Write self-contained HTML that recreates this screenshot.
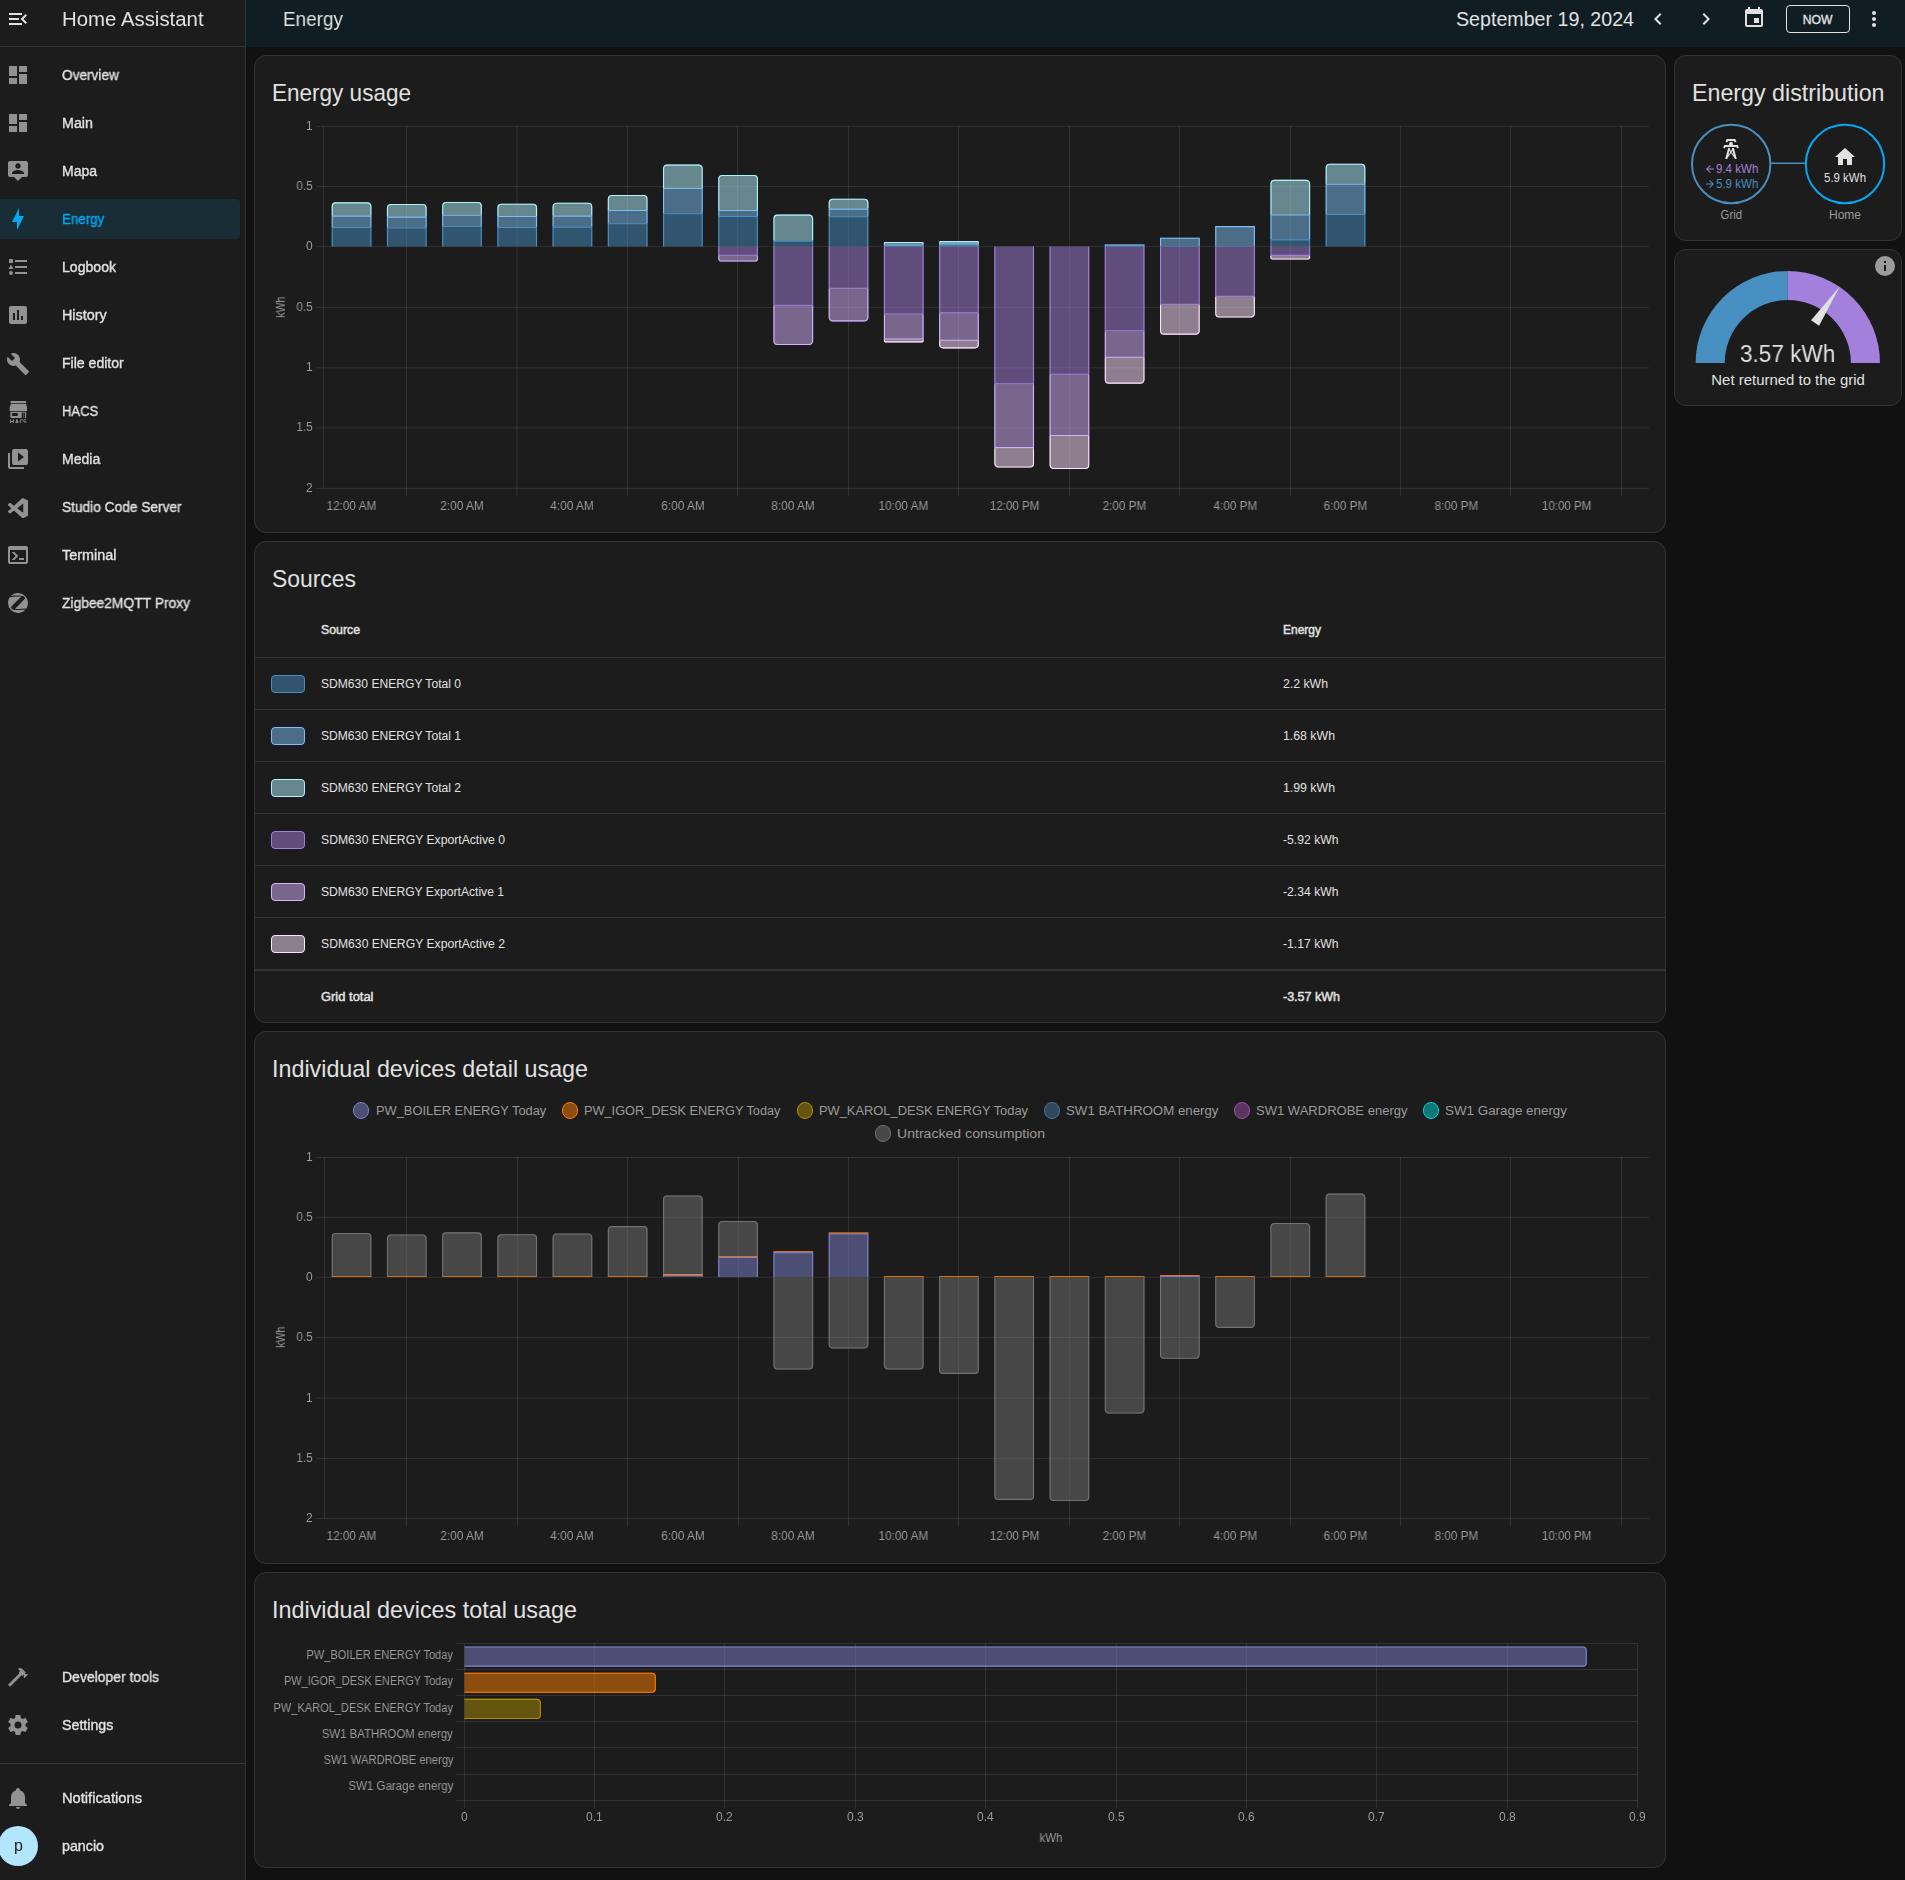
<!DOCTYPE html><html><head><meta charset="utf-8"><title>Energy – Home Assistant</title><style>
html,body{margin:0;padding:0;background:#111111;}body{width:1905px;height:1880px;position:relative;overflow:hidden;font-family:'Liberation Sans',sans-serif;-webkit-font-smoothing:antialiased}
.t{position:absolute;white-space:nowrap;line-height:1;}
</style></head><body>
<div style="position:absolute;left:0px;top:0px;width:245px;height:1880px;background:#1c1c1c;"></div>
<div style="position:absolute;left:245px;top:0px;width:1px;height:1880px;background:#343434;"></div>
<div style="position:absolute;left:0px;top:46px;width:245px;height:1px;background:#343434;"></div>
<div style="position:absolute;left:246px;top:0px;width:1659px;height:47px;background:#101e24;"></div>
<svg style="position:absolute;left:6.0px;top:7.0px" width="24" height="24" viewBox="0 0 24 24"><path fill="#e1e1e1" d="M21,15.61L19.59,17L14.58,12L19.59,7L21,8.39L17.44,12L21,15.61M3,6H16V8H3V6M3,13V11H13V13H3M3,18V16H16V18H3Z"/></svg>
<svg style="position:absolute;left:6.0px;top:63.0px" width="24" height="24" viewBox="0 0 24 24"><path fill="#929292" d="M13,3V9H21V3M13,21H21V11H13M3,21H11V15H3M3,13H11V3H3V13Z"/></svg>
<svg style="position:absolute;left:6.0px;top:111.0px" width="24" height="24" viewBox="0 0 24 24"><path fill="#929292" d="M13,3V9H21V3M13,21H21V11H13M3,21H11V15H3M3,13H11V3H3V13Z"/></svg>
<svg style="position:absolute;left:6.0px;top:159.0px" width="24" height="24" viewBox="0 0 24 24"><path fill="#929292" d="M20,2H4A2,2 0 0,0 2,4V16A2,2 0 0,0 4,18H8L12,22L16,18H20A2,2 0 0,0 22,16V4A2,2 0 0,0 20,2M12,4.3C13.5,4.3 14.7,5.5 14.7,7C14.7,8.5 13.5,9.7 12,9.7C10.5,9.7 9.3,8.5 9.3,7C9.3,5.5 10.5,4.3 12,4.3M18,15H6V14.1C6,12.1 10,11 12,11C14,11 18,12.1 18,14.1V15Z"/></svg>
<div style="position:absolute;left:0px;top:199px;width:240px;height:40px;background:#192d36;border-radius:0 4px 4px 0;"></div>
<svg style="position:absolute;left:6.0px;top:207.0px" width="24" height="24" viewBox="0 0 24 24"><path fill="#03a9f4" d="M11,15H6L13,1V9H18L11,23V15Z"/></svg>
<svg style="position:absolute;left:6.0px;top:255.0px" width="24" height="24" viewBox="0 0 24 24"><path fill="#929292" d="M5,9.5L7.5,14H2.5L5,9.5M3,4H7V8H3V4M5,20A2,2 0 0,0 7,18A2,2 0 0,0 5,16A2,2 0 0,0 3,18A2,2 0 0,0 5,20M9,5V7H21V5H9M9,19H21V17H9V19M9,13H21V11H9V13Z"/></svg>
<svg style="position:absolute;left:6.0px;top:303.0px" width="24" height="24" viewBox="0 0 24 24"><path fill="#929292" d="M17,17H15V13H17M13,17H11V7H13M9,17H7V10H9M19,3H5C3.89,3 3,3.89 3,5V19A2,2 0 0,0 5,21H19A2,2 0 0,0 21,19V5C21,3.89 20.1,3 19,3Z"/></svg>
<svg style="position:absolute;left:6.0px;top:352.0px" width="24" height="24" viewBox="0 0 24 24"><path fill="#929292" d="M22.7,19L13.6,9.9C14.5,7.6 14,4.9 12.1,3C10.1,1 7.1,0.6 4.7,1.7L9,6L6,9L1.6,4.7C0.4,7.1 0.9,10.1 2.9,12.1C4.8,14 7.5,14.5 9.8,13.6L18.9,22.7C19.3,23.1 19.9,23.1 20.3,22.7L22.6,20.4C23.1,20 23.1,19.3 22.7,19Z"/></svg>
<svg style="position:absolute;left:6px;top:399px" width="24" height="24" viewBox="0 0 24 24"><path fill="#929292" fill-rule="evenodd" d="M4.55,1.9H20.1V3.9H4.55ZM5.0,4.7H20.1L21.1,8.6V11.95H3.6V8.6ZM4.4,12.7H20.1V18.9H5.2Q4.4,18.9 4.4,18.1ZM6.1,14.1H11.8V17H6.1ZM15.7,13.4H18.9V18.9H15.7ZM17.1,13.4H17.5V18.9H17.1Z"/><g fill="none" stroke="#929292" stroke-width="1.0"><path transform="translate(4.6,20.85)" d="M0,-0.5V4M2.8,-0.5V4M0,1.75H2.8"/><path transform="translate(9.5,20.85)" d="M0,4L1.45,-0.4L2.9,4M0.6,2.6H2.3"/><path transform="translate(14.3,20.85)" d="M2.5,0H0.7Q0,0 0,0.7V2.8Q0,3.5 0.7,3.5H2.5"/><path transform="translate(17.6,20.85)" d="M2.3,0H0.7Q0,0 0,0.7V1.1Q0,1.75 0.7,1.75H1.6Q2.3,1.75 2.3,2.4V2.8Q2.3,3.5 1.6,3.5H-0.1"/></g></svg>
<svg style="position:absolute;left:6.0px;top:447.0px" width="24" height="24" viewBox="0 0 24 24"><path fill="#929292" d="M4,6H2V20A2,2 0 0,0 4,22H18V20H4V6M20,2H8A2,2 0 0,0 6,4V16A2,2 0 0,0 8,18H20A2,2 0 0,0 22,16V4A2,2 0 0,0 20,2M12,14.5V5.5L18,10L12,14.5Z"/></svg>
<svg style="position:absolute;left:7.799999999999999px;top:497.85px" width="20.3" height="20.3" viewBox="0 0 24 24"><path fill="#929292" d="M23.15 2.587L18.21.21a1.494 1.494 0 0 0-1.705.29l-9.46 8.63-4.12-3.128a.999.999 0 0 0-1.276.057L.327 7.261A1 1 0 0 0 .326 8.74L3.899 12 .326 15.26a1 1 0 0 0 .001 1.479L1.65 17.94a.999.999 0 0 0 1.276.057l4.12-3.128 9.46 8.63a1.492 1.492 0 0 0 1.704.29l4.942-2.377A1.5 1.5 0 0 0 24 20.06V3.939a1.5 1.5 0 0 0-.85-1.352zm-5.146 14.861L10.826 12l7.178-5.448v10.896z"/></svg>
<svg style="position:absolute;left:6.0px;top:543.0px" width="24" height="24" viewBox="0 0 24 24"><path fill="#929292" d="M20,19V7H4V19H20M20,3A2,2 0 0,1 22,5V19A2,2 0 0,1 20,21H4A2,2 0 0,1 2,19V5C2,3.89 2.9,3 4,3H20M13,17V15H18V17H13M9.58,13L5.57,9H8.4L11.7,12.3C12.09,12.69 12.09,13.33 11.7,13.72L8.42,17H5.59L9.58,13Z"/></svg>
<svg style="position:absolute;left:6.0px;top:591.0px" width="24" height="24" viewBox="0 0 24 24"><path fill="#929292" d="M4.06,6.15C3.97,6.17 3.88,6.22 3.8,6.28C2.66,7.9 2,9.87 2,12A10,10 0 0,0 12,22C15,22 17.68,20.68 19.5,18.6L17,18.85C14.25,19.15 11.45,19.19 8.66,18.96C7.95,18.94 7.24,18.76 6.59,18.45C5.73,18.06 5.15,17.23 5.07,16.29C5.06,16.13 5.12,16 5.23,15.87L7.42,13.6L15.03,5.7V5.6H10.84C8.57,5.64 6.31,5.82 4.06,6.15M20.17,17.5C20.26,17.47 20.35,17.44 20.43,17.39C21.42,15.83 22,14 22,12A10,10 0 0,0 12,2C9.22,2 6.7,3.13 4.89,4.97H5.17C8.28,4.57 11.43,4.47 14.56,4.65C15.5,4.64 16.45,4.82 17.33,5.17C18.25,5.53 18.89,6.38 19,7.37C19,7.53 18.93,7.7 18.82,7.82L9.71,17.19L9,17.95V18.06H13.14C15.5,18 17.84,17.81 20.17,17.5Z"/></svg>
<svg style="position:absolute;left:6.0px;top:1665.0px" width="24" height="24" viewBox="0 0 24 24"><path fill="#929292" d="M2,19.63L13.43,8.2L12.72,7.5L14.14,6.07L12,3.89C13.2,2.7 15.09,2.7 16.27,3.89L19.87,7.5L18.45,8.91H21.29L22,9.62L18.45,13.21L17.74,12.5V9.62L16.27,11.04L15.56,10.33L4.13,21.76L2,19.63Z"/></svg>
<svg style="position:absolute;left:6.0px;top:1713.0px" width="24" height="24" viewBox="0 0 24 24"><path fill="#929292" d="M12,15.5A3.5,3.5 0 0,1 8.5,12A3.5,3.5 0 0,1 12,8.5A3.5,3.5 0 0,1 15.5,12A3.5,3.5 0 0,1 12,15.5M19.43,12.97C19.47,12.65 19.5,12.33 19.5,12C19.5,11.67 19.47,11.34 19.43,11L21.54,9.37C21.73,9.22 21.78,8.95 21.66,8.73L19.66,5.27C19.54,5.05 19.27,4.96 19.05,5.05L16.56,6.05C16.04,5.66 15.5,5.32 14.87,5.07L14.5,2.42C14.46,2.18 14.25,2 14,2H10C9.75,2 9.54,2.18 9.5,2.42L9.13,5.07C8.5,5.32 7.96,5.66 7.44,6.05L4.95,5.05C4.73,4.96 4.46,5.05 4.34,5.27L2.34,8.73C2.21,8.95 2.27,9.22 2.46,9.37L4.57,11C4.53,11.34 4.5,11.67 4.5,12C4.5,12.33 4.53,12.65 4.57,12.97L2.46,14.63C2.27,14.78 2.21,15.05 2.34,15.27L4.34,18.73C4.46,18.95 4.73,19.03 4.95,18.95L7.44,17.94C7.96,18.34 8.5,18.68 9.13,18.93L9.5,21.58C9.54,21.82 9.75,22 10,22H14C14.25,22 14.46,21.82 14.5,21.58L14.87,18.93C15.5,18.67 16.04,18.34 16.56,17.94L19.05,18.95C19.27,19.03 19.54,18.95 19.66,18.73L21.66,15.27C21.78,15.05 21.73,14.78 21.54,14.63L19.43,12.97Z"/></svg>
<svg style="position:absolute;left:6.0px;top:1786.0px" width="24" height="24" viewBox="0 0 24 24"><path fill="#929292" d="M21,19V20H3V19L5,17V11C5,7.9 7.03,5.17 10,4.29C10,4.19 10,4.1 10,4A2,2 0 0,1 12,2A2,2 0 0,1 14,4C14,4.1 14,4.19 14,4.29C16.97,5.17 19,7.9 19,11V17L21,19M14,21A2,2 0 0,1 12,23A2,2 0 0,1 10,21"/></svg>
<div style="position:absolute;left:0px;top:1763px;width:245px;height:1px;background:#343434;"></div>
<div style="position:absolute;left:-2px;top:1826px;width:40px;height:40px;background:#b3e5fc;border-radius:50%;"></div>
<svg style="position:absolute;left:1646.0px;top:7.0px" width="24" height="24" viewBox="0 0 24 24"><path fill="#e1e1e1" d="M15.41,16.58L10.83,12L15.41,7.41L14,6L8,12L14,18L15.41,16.58Z"/></svg>
<svg style="position:absolute;left:1694.4px;top:7.0px" width="24" height="24" viewBox="0 0 24 24"><path fill="#e1e1e1" d="M8.59,16.58L13.17,12L8.59,7.41L10,6L16,12L10,18L8.59,16.58Z"/></svg>
<svg style="position:absolute;left:1742.0px;top:6.0px" width="24" height="24" viewBox="0 0 24 24"><path fill="#e1e1e1" d="M19,19H5V8H19M16,1V3H8V1H6V3H5C3.89,3 3,3.89 3,5V19A2,2 0 0,0 5,21H19A2,2 0 0,0 21,19V5C21,3.89 20.1,3 19,3H18V1M17,12H12V17H17V12Z"/></svg>
<div style="position:absolute;left:1786px;top:5px;width:64px;height:28px;background:transparent;box-sizing:border-box;border:1px solid #e1e1e1;border-radius:4px;"></div>
<svg style="position:absolute;left:1861.7px;top:7.0px" width="24" height="24" viewBox="0 0 24 24"><path fill="#e1e1e1" d="M12,16A2,2 0 0,1 14,18A2,2 0 0,1 12,20A2,2 0 0,1 10,18A2,2 0 0,1 12,16M12,10A2,2 0 0,1 14,12A2,2 0 0,1 12,14A2,2 0 0,1 10,12A2,2 0 0,1 12,10M12,4A2,2 0 0,1 14,6A2,2 0 0,1 12,8A2,2 0 0,1 10,6A2,2 0 0,1 12,4Z"/></svg>
<div style="position:absolute;left:254px;top:55px;width:1412px;height:478px;background:#1c1c1c;box-sizing:border-box;border:1px solid #343434;border-radius:12px;"></div>
<div style="position:absolute;left:254px;top:541px;width:1412px;height:482px;background:#1c1c1c;box-sizing:border-box;border:1px solid #343434;border-radius:12px;"></div>
<div style="position:absolute;left:254px;top:1031px;width:1412px;height:533px;background:#1c1c1c;box-sizing:border-box;border:1px solid #343434;border-radius:12px;"></div>
<div style="position:absolute;left:254px;top:1572px;width:1412px;height:296px;background:#1c1c1c;box-sizing:border-box;border:1px solid #343434;border-radius:12px;"></div>
<div style="position:absolute;left:1674px;top:55px;width:228px;height:186px;background:#1c1c1c;box-sizing:border-box;border:1px solid #343434;border-radius:12px;"></div>
<div style="position:absolute;left:1674px;top:249px;width:228px;height:157px;background:#1c1c1c;box-sizing:border-box;border:1px solid #343434;border-radius:12px;"></div>
<div style="position:absolute;left:352.6px;top:1102.2px;width:16.6px;height:16.6px;box-sizing:border-box;border-radius:50%;background:rgba(127,128,205,0.498);border:1px solid #7f80cd"></div>
<div style="position:absolute;left:561.7px;top:1102.2px;width:16.6px;height:16.6px;box-sizing:border-box;border-radius:50%;background:rgba(255,127,0,0.498);border:1px solid #ff7f00"></div>
<div style="position:absolute;left:796.8px;top:1102.2px;width:16.6px;height:16.6px;box-sizing:border-box;border-radius:50%;background:rgba(175,141,0,0.498);border:1px solid #af8d00"></div>
<div style="position:absolute;left:1043.5px;top:1102.2px;width:16.6px;height:16.6px;box-sizing:border-box;border-radius:50%;background:rgba(68,115,158,0.498);border:1px solid #44739e"></div>
<div style="position:absolute;left:1233.5px;top:1102.2px;width:16.6px;height:16.6px;box-sizing:border-box;border-radius:50%;background:rgba(152,78,163,0.498);border:1px solid #984ea3"></div>
<div style="position:absolute;left:1422.5px;top:1102.2px;width:16.6px;height:16.6px;box-sizing:border-box;border-radius:50%;background:rgba(0,210,213,0.498);border:1px solid #00d2d5"></div>
<div style="position:absolute;left:874.5px;top:1125.4px;width:16.6px;height:16.6px;box-sizing:border-box;border-radius:50%;background:rgba(114,114,114,0.498);border:1px solid #727272"></div>
<svg style="position:absolute;left:0;top:0" width="1905" height="1880" viewBox="0 0 1905 1880"><path d="M406.5 125.9L406.5 496.3" stroke="rgba(225,225,225,0.105)" stroke-width="1" fill="none"/><path d="M517.0 125.9L517.0 496.3" stroke="rgba(225,225,225,0.105)" stroke-width="1" fill="none"/><path d="M627.5 125.9L627.5 496.3" stroke="rgba(225,225,225,0.105)" stroke-width="1" fill="none"/><path d="M737.5 125.9L737.5 496.3" stroke="rgba(225,225,225,0.105)" stroke-width="1" fill="none"/><path d="M848.5 125.9L848.5 496.3" stroke="rgba(225,225,225,0.105)" stroke-width="1" fill="none"/><path d="M958.5 125.9L958.5 496.3" stroke="rgba(225,225,225,0.105)" stroke-width="1" fill="none"/><path d="M1069.5 125.9L1069.5 496.3" stroke="rgba(225,225,225,0.105)" stroke-width="1" fill="none"/><path d="M1179.5 125.9L1179.5 496.3" stroke="rgba(225,225,225,0.105)" stroke-width="1" fill="none"/><path d="M1290.5 125.9L1290.5 496.3" stroke="rgba(225,225,225,0.105)" stroke-width="1" fill="none"/><path d="M1400.5 125.9L1400.5 496.3" stroke="rgba(225,225,225,0.105)" stroke-width="1" fill="none"/><path d="M1510.5 125.9L1510.5 496.3" stroke="rgba(225,225,225,0.105)" stroke-width="1" fill="none"/><path d="M1621.5 125.9L1621.5 496.3" stroke="rgba(225,225,225,0.105)" stroke-width="1" fill="none"/><path d="M316 126.4L1649 126.4" stroke="rgba(225,225,225,0.105)" stroke-width="1" fill="none"/><path d="M316 186.4L1649 186.4" stroke="rgba(225,225,225,0.105)" stroke-width="1" fill="none"/><path d="M316 246.6L1649 246.6" stroke="rgba(225,225,225,0.105)" stroke-width="1" fill="none"/><path d="M316 307.4L1649 307.4" stroke="rgba(225,225,225,0.105)" stroke-width="1" fill="none"/><path d="M316 367.8L1649 367.8" stroke="rgba(225,225,225,0.105)" stroke-width="1" fill="none"/><path d="M316 427.9L1649 427.9" stroke="rgba(225,225,225,0.105)" stroke-width="1" fill="none"/><path d="M316 488.3L1649 488.3" stroke="rgba(225,225,225,0.105)" stroke-width="1" fill="none"/><path d="M323.5 125.9L323.5 488.8" stroke="rgba(225,225,225,0.105)" stroke-width="1" fill="none"/><path d="M331.70 246.60L331.70 226.95L371.40 226.95L371.40 246.60Z" fill="rgba(72,143,194,0.498)"/><path d="M332.25 246.60L332.25 227.50L370.85 227.50L370.85 246.60" fill="none" stroke="#488fc2" stroke-width="1.1"/><path d="M331.70 226.95L331.70 215.55L371.40 215.55L371.40 226.95Z" fill="rgba(125,191,245,0.498)"/><path d="M332.25 226.95L332.25 216.10L370.85 216.10L370.85 226.95" fill="none" stroke="#7dbff5" stroke-width="1.1"/><path d="M331.70 215.55L331.70 206.30A4.00 4.00 0 0 1 335.70 202.30L367.40 202.30A4.00 4.00 0 0 1 371.40 206.30L371.40 215.55Z" fill="rgba(177,242,255,0.498)"/><path d="M332.25 215.55L332.25 206.30A3.45 3.45 0 0 1 335.70 202.85L367.40 202.85A3.45 3.45 0 0 1 370.85 206.30L370.85 215.55" fill="none" stroke="#b1f2ff" stroke-width="1.1"/><path d="M386.92 246.60L386.92 227.45L426.62 227.45L426.62 246.60Z" fill="rgba(72,143,194,0.498)"/><path d="M387.47 246.60L387.47 228.00L426.07 228.00L426.07 246.60" fill="none" stroke="#488fc2" stroke-width="1.1"/><path d="M386.92 227.45L386.92 216.55L426.62 216.55L426.62 227.45Z" fill="rgba(125,191,245,0.498)"/><path d="M387.47 227.45L387.47 217.10L426.07 217.10L426.07 227.45" fill="none" stroke="#7dbff5" stroke-width="1.1"/><path d="M386.92 216.55L386.92 207.90A4.00 4.00 0 0 1 390.92 203.90L422.62 203.90A4.00 4.00 0 0 1 426.62 207.90L426.62 216.55Z" fill="rgba(177,242,255,0.498)"/><path d="M387.47 216.55L387.47 207.90A3.45 3.45 0 0 1 390.92 204.45L422.62 204.45A3.45 3.45 0 0 1 426.07 207.90L426.07 216.55" fill="none" stroke="#b1f2ff" stroke-width="1.1"/><path d="M442.14 246.60L442.14 225.95L481.84 225.95L481.84 246.60Z" fill="rgba(72,143,194,0.498)"/><path d="M442.69 246.60L442.69 226.50L481.29 226.50L481.29 246.60" fill="none" stroke="#488fc2" stroke-width="1.1"/><path d="M442.14 225.95L442.14 214.65L481.84 214.65L481.84 225.95Z" fill="rgba(125,191,245,0.498)"/><path d="M442.69 225.95L442.69 215.20L481.29 215.20L481.29 225.95" fill="none" stroke="#7dbff5" stroke-width="1.1"/><path d="M442.14 214.65L442.14 206.00A4.00 4.00 0 0 1 446.14 202.00L477.84 202.00A4.00 4.00 0 0 1 481.84 206.00L481.84 214.65Z" fill="rgba(177,242,255,0.498)"/><path d="M442.69 214.65L442.69 206.00A3.45 3.45 0 0 1 446.14 202.55L477.84 202.55A3.45 3.45 0 0 1 481.29 206.00L481.29 214.65" fill="none" stroke="#b1f2ff" stroke-width="1.1"/><path d="M497.36 246.60L497.36 226.95L537.06 226.95L537.06 246.60Z" fill="rgba(72,143,194,0.498)"/><path d="M497.91 246.60L497.91 227.50L536.51 227.50L536.51 246.60" fill="none" stroke="#488fc2" stroke-width="1.1"/><path d="M497.36 226.95L497.36 215.95L537.06 215.95L537.06 226.95Z" fill="rgba(125,191,245,0.498)"/><path d="M497.91 226.95L497.91 216.50L536.51 216.50L536.51 226.95" fill="none" stroke="#7dbff5" stroke-width="1.1"/><path d="M497.36 215.95L497.36 207.70A4.00 4.00 0 0 1 501.36 203.70L533.06 203.70A4.00 4.00 0 0 1 537.06 207.70L537.06 215.95Z" fill="rgba(177,242,255,0.498)"/><path d="M497.91 215.95L497.91 207.70A3.45 3.45 0 0 1 501.36 204.25L533.06 204.25A3.45 3.45 0 0 1 536.51 207.70L536.51 215.95" fill="none" stroke="#b1f2ff" stroke-width="1.1"/><path d="M552.58 246.60L552.58 226.55L592.28 226.55L592.28 246.60Z" fill="rgba(72,143,194,0.498)"/><path d="M553.13 246.60L553.13 227.10L591.73 227.10L591.73 246.60" fill="none" stroke="#488fc2" stroke-width="1.1"/><path d="M552.58 226.55L552.58 215.55L592.28 215.55L592.28 226.55Z" fill="rgba(125,191,245,0.498)"/><path d="M553.13 226.55L553.13 216.10L591.73 216.10L591.73 226.55" fill="none" stroke="#7dbff5" stroke-width="1.1"/><path d="M552.58 215.55L552.58 206.70A4.00 4.00 0 0 1 556.58 202.70L588.28 202.70A4.00 4.00 0 0 1 592.28 206.70L592.28 215.55Z" fill="rgba(177,242,255,0.498)"/><path d="M553.13 215.55L553.13 206.70A3.45 3.45 0 0 1 556.58 203.25L588.28 203.25A3.45 3.45 0 0 1 591.73 206.70L591.73 215.55" fill="none" stroke="#b1f2ff" stroke-width="1.1"/><path d="M607.80 246.60L607.80 223.15L647.50 223.15L647.50 246.60Z" fill="rgba(72,143,194,0.498)"/><path d="M608.35 246.60L608.35 223.70L646.95 223.70L646.95 246.60" fill="none" stroke="#488fc2" stroke-width="1.1"/><path d="M607.80 223.15L607.80 209.95L647.50 209.95L647.50 223.15Z" fill="rgba(125,191,245,0.498)"/><path d="M608.35 223.15L608.35 210.50L646.95 210.50L646.95 223.15" fill="none" stroke="#7dbff5" stroke-width="1.1"/><path d="M607.80 209.95L607.80 199.00A4.00 4.00 0 0 1 611.80 195.00L643.50 195.00A4.00 4.00 0 0 1 647.50 199.00L647.50 209.95Z" fill="rgba(177,242,255,0.498)"/><path d="M608.35 209.95L608.35 199.00A3.45 3.45 0 0 1 611.80 195.55L643.50 195.55A3.45 3.45 0 0 1 646.95 199.00L646.95 209.95" fill="none" stroke="#b1f2ff" stroke-width="1.1"/><path d="M663.02 246.60L663.02 213.15L702.72 213.15L702.72 246.60Z" fill="rgba(72,143,194,0.498)"/><path d="M663.57 246.60L663.57 213.70L702.17 213.70L702.17 246.60" fill="none" stroke="#488fc2" stroke-width="1.1"/><path d="M663.02 213.15L663.02 187.95L702.72 187.95L702.72 213.15Z" fill="rgba(125,191,245,0.498)"/><path d="M663.57 213.15L663.57 188.50L702.17 188.50L702.17 213.15" fill="none" stroke="#7dbff5" stroke-width="1.1"/><path d="M663.02 187.95L663.02 168.60A4.00 4.00 0 0 1 667.02 164.60L698.72 164.60A4.00 4.00 0 0 1 702.72 168.60L702.72 187.95Z" fill="rgba(177,242,255,0.498)"/><path d="M663.57 187.95L663.57 168.60A3.45 3.45 0 0 1 667.02 165.15L698.72 165.15A3.45 3.45 0 0 1 702.17 168.60L702.17 187.95" fill="none" stroke="#b1f2ff" stroke-width="1.1"/><path d="M718.24 246.60L718.24 215.95L757.94 215.95L757.94 246.60Z" fill="rgba(72,143,194,0.498)"/><path d="M718.79 246.60L718.79 216.50L757.39 216.50L757.39 246.60" fill="none" stroke="#488fc2" stroke-width="1.1"/><path d="M718.24 215.95L718.24 209.95L757.94 209.95L757.94 215.95Z" fill="rgba(125,191,245,0.498)"/><path d="M718.79 215.95L718.79 210.50L757.39 210.50L757.39 215.95" fill="none" stroke="#7dbff5" stroke-width="1.1"/><path d="M718.24 209.95L718.24 178.90A4.00 4.00 0 0 1 722.24 174.90L753.94 174.90A4.00 4.00 0 0 1 757.94 178.90L757.94 209.95Z" fill="rgba(177,242,255,0.498)"/><path d="M718.79 209.95L718.79 178.90A3.45 3.45 0 0 1 722.24 175.45L753.94 175.45A3.45 3.45 0 0 1 757.39 178.90L757.39 209.95" fill="none" stroke="#b1f2ff" stroke-width="1.1"/><path d="M718.24 246.60L718.24 255.85L757.94 255.85L757.94 246.60Z" fill="rgba(162,128,219,0.498)"/><path d="M718.79 246.60L718.79 255.30L757.39 255.30L757.39 246.60" fill="none" stroke="#a280db" stroke-width="1.1"/><path d="M718.24 255.85L718.24 258.68A2.82 2.82 0 0 0 721.06 261.50L755.12 261.50A2.82 2.82 0 0 0 757.94 258.68L757.94 255.85Z" fill="rgba(213,176,255,0.498)"/><path d="M718.79 255.85L718.79 258.68A2.27 2.27 0 0 0 721.06 260.95L755.12 260.95A2.27 2.27 0 0 0 757.39 258.68L757.39 255.85" fill="none" stroke="#d5b0ff" stroke-width="1.1"/><path d="M773.46 246.60L773.46 240.55L813.16 240.55L813.16 246.60Z" fill="rgba(72,143,194,0.498)"/><path d="M774.01 246.60L774.01 241.10L812.61 241.10L812.61 246.60" fill="none" stroke="#488fc2" stroke-width="1.1"/><path d="M773.46 240.55L773.46 218.60A4.00 4.00 0 0 1 777.46 214.60L809.16 214.60A4.00 4.00 0 0 1 813.16 218.60L813.16 240.55Z" fill="rgba(177,242,255,0.498)"/><path d="M774.01 240.55L774.01 218.60A3.45 3.45 0 0 1 777.46 215.15L809.16 215.15A3.45 3.45 0 0 1 812.61 218.60L812.61 240.55" fill="none" stroke="#b1f2ff" stroke-width="1.1"/><path d="M773.46 246.60L773.46 305.85L813.16 305.85L813.16 246.60Z" fill="rgba(162,128,219,0.498)"/><path d="M774.01 246.60L774.01 305.30L812.61 305.30L812.61 246.60" fill="none" stroke="#a280db" stroke-width="1.1"/><path d="M773.46 305.85L773.46 341.00A4.00 4.00 0 0 0 777.46 345.00L809.16 345.00A4.00 4.00 0 0 0 813.16 341.00L813.16 305.85Z" fill="rgba(213,176,255,0.498)"/><path d="M774.01 305.85L774.01 341.00A3.45 3.45 0 0 0 777.46 344.45L809.16 344.45A3.45 3.45 0 0 0 812.61 341.00L812.61 305.85" fill="none" stroke="#d5b0ff" stroke-width="1.1"/><path d="M828.68 246.60L828.68 216.15L868.38 216.15L868.38 246.60Z" fill="rgba(72,143,194,0.498)"/><path d="M829.23 246.60L829.23 216.70L867.83 216.70L867.83 246.60" fill="none" stroke="#488fc2" stroke-width="1.1"/><path d="M828.68 216.15L828.68 208.55L868.38 208.55L868.38 216.15Z" fill="rgba(125,191,245,0.498)"/><path d="M829.23 216.15L829.23 209.10L867.83 209.10L867.83 216.15" fill="none" stroke="#7dbff5" stroke-width="1.1"/><path d="M828.68 208.55L828.68 202.70A4.00 4.00 0 0 1 832.68 198.70L864.38 198.70A4.00 4.00 0 0 1 868.38 202.70L868.38 208.55Z" fill="rgba(177,242,255,0.498)"/><path d="M829.23 208.55L829.23 202.70A3.45 3.45 0 0 1 832.68 199.25L864.38 199.25A3.45 3.45 0 0 1 867.83 202.70L867.83 208.55" fill="none" stroke="#b1f2ff" stroke-width="1.1"/><path d="M828.68 246.60L828.68 288.85L868.38 288.85L868.38 246.60Z" fill="rgba(162,128,219,0.498)"/><path d="M829.23 246.60L829.23 288.30L867.83 288.30L867.83 246.60" fill="none" stroke="#a280db" stroke-width="1.1"/><path d="M828.68 288.85L828.68 317.40A4.00 4.00 0 0 0 832.68 321.40L864.38 321.40A4.00 4.00 0 0 0 868.38 317.40L868.38 288.85Z" fill="rgba(213,176,255,0.498)"/><path d="M829.23 288.85L829.23 317.40A3.45 3.45 0 0 0 832.68 320.85L864.38 320.85A3.45 3.45 0 0 0 867.83 317.40L867.83 288.85" fill="none" stroke="#d5b0ff" stroke-width="1.1"/><path d="M883.90 246.60L883.90 245.45L923.60 245.45L923.60 246.60Z" fill="rgba(72,143,194,0.498)"/><path d="M884.45 246.60L884.45 246.00L923.05 246.00L923.05 246.60" fill="none" stroke="#488fc2" stroke-width="1.1"/><path d="M883.90 245.45L883.90 244.45L923.60 244.45L923.60 245.45Z" fill="rgba(125,191,245,0.498)"/><path d="M883.90 245.45L883.90 244.45L923.60 244.45L923.60 245.45Z" fill="#7dbff5"/><path d="M883.90 244.45L883.90 243.22A1.22 1.22 0 0 1 885.12 242.00L922.38 242.00A1.22 1.22 0 0 1 923.60 243.22L923.60 244.45Z" fill="rgba(177,242,255,0.498)"/><path d="M884.45 244.45L884.45 243.22A0.67 0.67 0 0 1 885.12 242.55L922.38 242.55A0.67 0.67 0 0 1 923.05 243.22L923.05 244.45" fill="none" stroke="#b1f2ff" stroke-width="1.1"/><path d="M883.90 246.60L883.90 314.55L923.60 314.55L923.60 246.60Z" fill="rgba(162,128,219,0.498)"/><path d="M884.45 246.60L884.45 314.00L923.05 314.00L923.05 246.60" fill="none" stroke="#a280db" stroke-width="1.1"/><path d="M883.90 314.55L883.90 339.55L923.60 339.55L923.60 314.55Z" fill="rgba(213,176,255,0.498)"/><path d="M884.45 314.55L884.45 339.00L923.05 339.00L923.05 314.55" fill="none" stroke="#d5b0ff" stroke-width="1.1"/><path d="M883.90 339.55L883.90 340.98A1.42 1.42 0 0 0 885.32 342.40L922.18 342.40A1.42 1.42 0 0 0 923.60 340.98L923.60 339.55Z" fill="rgba(255,226,255,0.498)"/><path d="M884.45 339.55L884.45 340.97A0.87 0.87 0 0 0 885.32 341.85L922.18 341.85A0.87 0.87 0 0 0 923.05 340.97L923.05 339.55" fill="none" stroke="#ffe2ff" stroke-width="1.1"/><path d="M939.12 246.60L939.12 245.45L978.82 245.45L978.82 246.60Z" fill="rgba(72,143,194,0.498)"/><path d="M939.67 246.60L939.67 246.00L978.27 246.00L978.27 246.60" fill="none" stroke="#488fc2" stroke-width="1.1"/><path d="M939.12 245.45L939.12 243.35L978.82 243.35L978.82 245.45Z" fill="rgba(125,191,245,0.498)"/><path d="M939.67 245.45L939.67 243.90L978.27 243.90L978.27 245.45" fill="none" stroke="#7dbff5" stroke-width="1.1"/><path d="M939.12 243.35L939.12 242.22A1.12 1.12 0 0 1 940.25 241.10L977.70 241.10A1.12 1.12 0 0 1 978.82 242.22L978.82 243.35Z" fill="rgba(177,242,255,0.498)"/><path d="M939.67 243.35L939.67 242.22A0.57 0.57 0 0 1 940.25 241.65L977.70 241.65A0.57 0.57 0 0 1 978.27 242.22L978.27 243.35" fill="none" stroke="#b1f2ff" stroke-width="1.1"/><path d="M939.12 246.60L939.12 313.45L978.82 313.45L978.82 246.60Z" fill="rgba(162,128,219,0.498)"/><path d="M939.67 246.60L939.67 312.90L978.27 312.90L978.27 246.60" fill="none" stroke="#a280db" stroke-width="1.1"/><path d="M939.12 313.45L939.12 340.85L978.82 340.85L978.82 313.45Z" fill="rgba(213,176,255,0.498)"/><path d="M939.67 313.45L939.67 340.30L978.27 340.30L978.27 313.45" fill="none" stroke="#d5b0ff" stroke-width="1.1"/><path d="M939.12 340.85L939.12 344.62A3.77 3.77 0 0 0 942.89 348.40L975.05 348.40A3.77 3.77 0 0 0 978.82 344.62L978.82 340.85Z" fill="rgba(255,226,255,0.498)"/><path d="M939.67 340.85L939.67 344.62A3.22 3.22 0 0 0 942.89 347.85L975.05 347.85A3.22 3.22 0 0 0 978.27 344.62L978.27 340.85" fill="none" stroke="#ffe2ff" stroke-width="1.1"/><path d="M994.34 246.60L994.34 384.25L1034.04 384.25L1034.04 246.60Z" fill="rgba(162,128,219,0.498)"/><path d="M994.89 246.60L994.89 383.70L1033.49 383.70L1033.49 246.60" fill="none" stroke="#a280db" stroke-width="1.1"/><path d="M994.34 384.25L994.34 448.15L1034.04 448.15L1034.04 384.25Z" fill="rgba(213,176,255,0.498)"/><path d="M994.89 384.25L994.89 447.60L1033.49 447.60L1033.49 384.25" fill="none" stroke="#d5b0ff" stroke-width="1.1"/><path d="M994.34 448.15L994.34 463.50A4.00 4.00 0 0 0 998.34 467.50L1030.04 467.50A4.00 4.00 0 0 0 1034.04 463.50L1034.04 448.15Z" fill="rgba(255,226,255,0.498)"/><path d="M994.89 448.15L994.89 463.50A3.45 3.45 0 0 0 998.34 466.95L1030.04 466.95A3.45 3.45 0 0 0 1033.49 463.50L1033.49 448.15" fill="none" stroke="#ffe2ff" stroke-width="1.1"/><path d="M1049.56 246.60L1049.56 374.75L1089.26 374.75L1089.26 246.60Z" fill="rgba(162,128,219,0.498)"/><path d="M1050.11 246.60L1050.11 374.20L1088.71 374.20L1088.71 246.60" fill="none" stroke="#a280db" stroke-width="1.1"/><path d="M1049.56 374.75L1049.56 436.05L1089.26 436.05L1089.26 374.75Z" fill="rgba(213,176,255,0.498)"/><path d="M1050.11 374.75L1050.11 435.50L1088.71 435.50L1088.71 374.75" fill="none" stroke="#d5b0ff" stroke-width="1.1"/><path d="M1049.56 436.05L1049.56 465.00A4.00 4.00 0 0 0 1053.56 469.00L1085.26 469.00A4.00 4.00 0 0 0 1089.26 465.00L1089.26 436.05Z" fill="rgba(255,226,255,0.498)"/><path d="M1050.11 436.05L1050.11 465.00A3.45 3.45 0 0 0 1053.56 468.45L1085.26 468.45A3.45 3.45 0 0 0 1088.71 465.00L1088.71 436.05" fill="none" stroke="#ffe2ff" stroke-width="1.1"/><path d="M1104.78 246.60L1104.78 245.95L1144.48 245.95L1144.48 246.60Z" fill="rgba(72,143,194,0.498)"/><path d="M1104.78 246.60L1104.78 245.95L1144.48 245.95L1144.48 246.60Z" fill="#488fc2"/><path d="M1104.78 245.95L1104.78 244.40L1144.48 244.40L1144.48 245.95Z" fill="rgba(125,191,245,0.498)"/><path d="M1105.33 245.95L1105.33 244.95L1143.93 244.95L1143.93 245.95" fill="none" stroke="#7dbff5" stroke-width="1.1"/><path d="M1104.78 246.60L1104.78 331.35L1144.48 331.35L1144.48 246.60Z" fill="rgba(162,128,219,0.498)"/><path d="M1105.33 246.60L1105.33 330.80L1143.93 330.80L1143.93 246.60" fill="none" stroke="#a280db" stroke-width="1.1"/><path d="M1104.78 331.35L1104.78 357.75L1144.48 357.75L1144.48 331.35Z" fill="rgba(213,176,255,0.498)"/><path d="M1105.33 331.35L1105.33 357.20L1143.93 357.20L1143.93 331.35" fill="none" stroke="#d5b0ff" stroke-width="1.1"/><path d="M1104.78 357.75L1104.78 379.70A4.00 4.00 0 0 0 1108.78 383.70L1140.48 383.70A4.00 4.00 0 0 0 1144.48 379.70L1144.48 357.75Z" fill="rgba(255,226,255,0.498)"/><path d="M1105.33 357.75L1105.33 379.70A3.45 3.45 0 0 0 1108.78 383.15L1140.48 383.15A3.45 3.45 0 0 0 1143.93 379.70L1143.93 357.75" fill="none" stroke="#ffe2ff" stroke-width="1.1"/><path d="M1160.00 246.60L1160.00 245.95L1199.70 245.95L1199.70 246.60Z" fill="rgba(72,143,194,0.498)"/><path d="M1160.00 246.60L1160.00 245.95L1199.70 245.95L1199.70 246.60Z" fill="#488fc2"/><path d="M1160.00 245.95L1160.00 237.70L1199.70 237.70L1199.70 245.95Z" fill="rgba(125,191,245,0.498)"/><path d="M1160.55 245.95L1160.55 238.25L1199.15 238.25L1199.15 245.95" fill="none" stroke="#7dbff5" stroke-width="1.1"/><path d="M1160.00 246.60L1160.00 304.85L1199.70 304.85L1199.70 246.60Z" fill="rgba(162,128,219,0.498)"/><path d="M1160.55 246.60L1160.55 304.30L1199.15 304.30L1199.15 246.60" fill="none" stroke="#a280db" stroke-width="1.1"/><path d="M1160.00 304.85L1160.00 330.70A4.00 4.00 0 0 0 1164.00 334.70L1195.70 334.70A4.00 4.00 0 0 0 1199.70 330.70L1199.70 304.85Z" fill="rgba(255,226,255,0.498)"/><path d="M1160.55 304.85L1160.55 330.70A3.45 3.45 0 0 0 1164.00 334.15L1195.70 334.15A3.45 3.45 0 0 0 1199.15 330.70L1199.15 304.85" fill="none" stroke="#ffe2ff" stroke-width="1.1"/><path d="M1215.22 246.60L1215.22 245.95L1254.92 245.95L1254.92 246.60Z" fill="rgba(72,143,194,0.498)"/><path d="M1215.22 246.60L1215.22 245.95L1254.92 245.95L1254.92 246.60Z" fill="#488fc2"/><path d="M1215.22 245.95L1215.22 226.10L1254.92 226.10L1254.92 245.95Z" fill="rgba(125,191,245,0.498)"/><path d="M1215.77 245.95L1215.77 226.65L1254.37 226.65L1254.37 245.95" fill="none" stroke="#7dbff5" stroke-width="1.1"/><path d="M1215.22 246.60L1215.22 296.75L1254.92 296.75L1254.92 246.60Z" fill="rgba(162,128,219,0.498)"/><path d="M1215.77 246.60L1215.77 296.20L1254.37 296.20L1254.37 246.60" fill="none" stroke="#a280db" stroke-width="1.1"/><path d="M1215.22 296.75L1215.22 313.50A4.00 4.00 0 0 0 1219.22 317.50L1250.92 317.50A4.00 4.00 0 0 0 1254.92 313.50L1254.92 296.75Z" fill="rgba(255,226,255,0.498)"/><path d="M1215.77 296.75L1215.77 313.50A3.45 3.45 0 0 0 1219.22 316.95L1250.92 316.95A3.45 3.45 0 0 0 1254.37 313.50L1254.37 296.75" fill="none" stroke="#ffe2ff" stroke-width="1.1"/><path d="M1270.44 246.60L1270.44 239.35L1310.14 239.35L1310.14 246.60Z" fill="rgba(72,143,194,0.498)"/><path d="M1270.99 246.60L1270.99 239.90L1309.59 239.90L1309.59 246.60" fill="none" stroke="#488fc2" stroke-width="1.1"/><path d="M1270.44 239.35L1270.44 214.45L1310.14 214.45L1310.14 239.35Z" fill="rgba(125,191,245,0.498)"/><path d="M1270.99 239.35L1270.99 215.00L1309.59 215.00L1309.59 239.35" fill="none" stroke="#7dbff5" stroke-width="1.1"/><path d="M1270.44 214.45L1270.44 183.80A4.00 4.00 0 0 1 1274.44 179.80L1306.14 179.80A4.00 4.00 0 0 1 1310.14 183.80L1310.14 214.45Z" fill="rgba(177,242,255,0.498)"/><path d="M1270.99 214.45L1270.99 183.80A3.45 3.45 0 0 1 1274.44 180.35L1306.14 180.35A3.45 3.45 0 0 1 1309.59 183.80L1309.59 214.45" fill="none" stroke="#b1f2ff" stroke-width="1.1"/><path d="M1270.44 246.60L1270.44 255.95L1310.14 255.95L1310.14 246.60Z" fill="rgba(162,128,219,0.498)"/><path d="M1270.99 246.60L1270.99 255.40L1309.59 255.40L1309.59 246.60" fill="none" stroke="#a280db" stroke-width="1.1"/><path d="M1270.44 255.95L1270.44 257.78A1.83 1.83 0 0 0 1272.27 259.60L1308.31 259.60A1.83 1.83 0 0 0 1310.14 257.78L1310.14 255.95Z" fill="rgba(255,226,255,0.498)"/><path d="M1270.99 255.95L1270.99 257.78A1.28 1.28 0 0 0 1272.27 259.05L1308.31 259.05A1.28 1.28 0 0 0 1309.59 257.78L1309.59 255.95" fill="none" stroke="#ffe2ff" stroke-width="1.1"/><path d="M1325.66 246.60L1325.66 213.85L1365.36 213.85L1365.36 246.60Z" fill="rgba(72,143,194,0.498)"/><path d="M1326.21 246.60L1326.21 214.40L1364.81 214.40L1364.81 246.60" fill="none" stroke="#488fc2" stroke-width="1.1"/><path d="M1325.66 213.85L1325.66 183.65L1365.36 183.65L1365.36 213.85Z" fill="rgba(125,191,245,0.498)"/><path d="M1326.21 213.85L1326.21 184.20L1364.81 184.20L1364.81 213.85" fill="none" stroke="#7dbff5" stroke-width="1.1"/><path d="M1325.66 183.65L1325.66 167.70A4.00 4.00 0 0 1 1329.66 163.70L1361.36 163.70A4.00 4.00 0 0 1 1365.36 167.70L1365.36 183.65Z" fill="rgba(177,242,255,0.498)"/><path d="M1326.21 183.65L1326.21 167.70A3.45 3.45 0 0 1 1329.66 164.25L1361.36 164.25A3.45 3.45 0 0 1 1364.81 167.70L1364.81 183.65" fill="none" stroke="#b1f2ff" stroke-width="1.1"/><path d="M406.5 1157.0L406.5 1526.5" stroke="rgba(225,225,225,0.105)" stroke-width="1" fill="none"/><path d="M517.5 1157.0L517.5 1526.5" stroke="rgba(225,225,225,0.105)" stroke-width="1" fill="none"/><path d="M627.5 1157.0L627.5 1526.5" stroke="rgba(225,225,225,0.105)" stroke-width="1" fill="none"/><path d="M738.5 1157.0L738.5 1526.5" stroke="rgba(225,225,225,0.105)" stroke-width="1" fill="none"/><path d="M848.5 1157.0L848.5 1526.5" stroke="rgba(225,225,225,0.105)" stroke-width="1" fill="none"/><path d="M958.5 1157.0L958.5 1526.5" stroke="rgba(225,225,225,0.105)" stroke-width="1" fill="none"/><path d="M1069.5 1157.0L1069.5 1526.5" stroke="rgba(225,225,225,0.105)" stroke-width="1" fill="none"/><path d="M1179.5 1157.0L1179.5 1526.5" stroke="rgba(225,225,225,0.105)" stroke-width="1" fill="none"/><path d="M1290.5 1157.0L1290.5 1526.5" stroke="rgba(225,225,225,0.105)" stroke-width="1" fill="none"/><path d="M1400.5 1157.0L1400.5 1526.5" stroke="rgba(225,225,225,0.105)" stroke-width="1" fill="none"/><path d="M1510.5 1157.0L1510.5 1526.5" stroke="rgba(225,225,225,0.105)" stroke-width="1" fill="none"/><path d="M1621.5 1157.0L1621.5 1526.5" stroke="rgba(225,225,225,0.105)" stroke-width="1" fill="none"/><path d="M316 1157.5L1649 1157.5" stroke="rgba(225,225,225,0.105)" stroke-width="1" fill="none"/><path d="M316 1217.3L1649 1217.3" stroke="rgba(225,225,225,0.105)" stroke-width="1" fill="none"/><path d="M316 1277.3L1649 1277.3" stroke="rgba(225,225,225,0.105)" stroke-width="1" fill="none"/><path d="M316 1337.5L1649 1337.5" stroke="rgba(225,225,225,0.105)" stroke-width="1" fill="none"/><path d="M316 1398.1L1649 1398.1" stroke="rgba(225,225,225,0.105)" stroke-width="1" fill="none"/><path d="M316 1458.4L1649 1458.4" stroke="rgba(225,225,225,0.105)" stroke-width="1" fill="none"/><path d="M316 1518.5L1649 1518.5" stroke="rgba(225,225,225,0.105)" stroke-width="1" fill="none"/><path d="M324.5 1157.0L324.5 1519.0" stroke="rgba(225,225,225,0.105)" stroke-width="1" fill="none"/><path d="M331.70 1277.00L331.70 1276.20L371.40 1276.20L371.40 1277.00Z" fill="rgba(255,127,0,0.498)"/><path d="M331.70 1277.00L331.70 1276.20L371.40 1276.20L371.40 1277.00Z" fill="#ff7f00"/><path d="M331.70 1276.20L331.70 1237.00A4.00 4.00 0 0 1 335.70 1233.00L367.40 1233.00A4.00 4.00 0 0 1 371.40 1237.00L371.40 1276.20Z" fill="rgba(114,114,114,0.498)"/><path d="M332.25 1276.20L332.25 1237.00A3.45 3.45 0 0 1 335.70 1233.55L367.40 1233.55A3.45 3.45 0 0 1 370.85 1237.00L370.85 1276.20" fill="none" stroke="#727272" stroke-width="1.1"/><path d="M386.92 1277.00L386.92 1276.20L426.62 1276.20L426.62 1277.00Z" fill="rgba(255,127,0,0.498)"/><path d="M386.92 1277.00L386.92 1276.20L426.62 1276.20L426.62 1277.00Z" fill="#ff7f00"/><path d="M386.92 1276.20L386.92 1238.40A4.00 4.00 0 0 1 390.92 1234.40L422.62 1234.40A4.00 4.00 0 0 1 426.62 1238.40L426.62 1276.20Z" fill="rgba(114,114,114,0.498)"/><path d="M387.47 1276.20L387.47 1238.40A3.45 3.45 0 0 1 390.92 1234.95L422.62 1234.95A3.45 3.45 0 0 1 426.07 1238.40L426.07 1276.20" fill="none" stroke="#727272" stroke-width="1.1"/><path d="M442.14 1277.00L442.14 1276.20L481.84 1276.20L481.84 1277.00Z" fill="rgba(255,127,0,0.498)"/><path d="M442.14 1277.00L442.14 1276.20L481.84 1276.20L481.84 1277.00Z" fill="#ff7f00"/><path d="M442.14 1276.20L442.14 1236.30A4.00 4.00 0 0 1 446.14 1232.30L477.84 1232.30A4.00 4.00 0 0 1 481.84 1236.30L481.84 1276.20Z" fill="rgba(114,114,114,0.498)"/><path d="M442.69 1276.20L442.69 1236.30A3.45 3.45 0 0 1 446.14 1232.85L477.84 1232.85A3.45 3.45 0 0 1 481.29 1236.30L481.29 1276.20" fill="none" stroke="#727272" stroke-width="1.1"/><path d="M497.36 1277.00L497.36 1276.20L537.06 1276.20L537.06 1277.00Z" fill="rgba(255,127,0,0.498)"/><path d="M497.36 1277.00L497.36 1276.20L537.06 1276.20L537.06 1277.00Z" fill="#ff7f00"/><path d="M497.36 1276.20L497.36 1238.20A4.00 4.00 0 0 1 501.36 1234.20L533.06 1234.20A4.00 4.00 0 0 1 537.06 1238.20L537.06 1276.20Z" fill="rgba(114,114,114,0.498)"/><path d="M497.91 1276.20L497.91 1238.20A3.45 3.45 0 0 1 501.36 1234.75L533.06 1234.75A3.45 3.45 0 0 1 536.51 1238.20L536.51 1276.20" fill="none" stroke="#727272" stroke-width="1.1"/><path d="M552.58 1277.00L552.58 1276.20L592.28 1276.20L592.28 1277.00Z" fill="rgba(255,127,0,0.498)"/><path d="M552.58 1277.00L552.58 1276.20L592.28 1276.20L592.28 1277.00Z" fill="#ff7f00"/><path d="M552.58 1276.20L552.58 1237.40A4.00 4.00 0 0 1 556.58 1233.40L588.28 1233.40A4.00 4.00 0 0 1 592.28 1237.40L592.28 1276.20Z" fill="rgba(114,114,114,0.498)"/><path d="M553.13 1276.20L553.13 1237.40A3.45 3.45 0 0 1 556.58 1233.95L588.28 1233.95A3.45 3.45 0 0 1 591.73 1237.40L591.73 1276.20" fill="none" stroke="#727272" stroke-width="1.1"/><path d="M607.80 1277.00L607.80 1276.20L647.50 1276.20L647.50 1277.00Z" fill="rgba(255,127,0,0.498)"/><path d="M607.80 1277.00L607.80 1276.20L647.50 1276.20L647.50 1277.00Z" fill="#ff7f00"/><path d="M607.80 1276.20L607.80 1230.10A4.00 4.00 0 0 1 611.80 1226.10L643.50 1226.10A4.00 4.00 0 0 1 647.50 1230.10L647.50 1276.20Z" fill="rgba(114,114,114,0.498)"/><path d="M608.35 1276.20L608.35 1230.10A3.45 3.45 0 0 1 611.80 1226.65L643.50 1226.65A3.45 3.45 0 0 1 646.95 1230.10L646.95 1276.20" fill="none" stroke="#727272" stroke-width="1.1"/><path d="M663.02 1277.00L663.02 1274.90L702.72 1274.90L702.72 1277.00Z" fill="rgba(127,128,205,0.498)"/><path d="M663.57 1277.00L663.57 1275.45L702.17 1275.45L702.17 1277.00" fill="none" stroke="#7f80cd" stroke-width="1.1"/><path d="M663.02 1274.90L663.02 1274.10L702.72 1274.10L702.72 1274.90Z" fill="rgba(255,127,0,0.498)"/><path d="M663.02 1274.90L663.02 1274.10L702.72 1274.10L702.72 1274.90Z" fill="#ff7f00"/><path d="M663.02 1274.10L663.02 1199.50A4.00 4.00 0 0 1 667.02 1195.50L698.72 1195.50A4.00 4.00 0 0 1 702.72 1199.50L702.72 1274.10Z" fill="rgba(114,114,114,0.498)"/><path d="M663.57 1274.10L663.57 1199.50A3.45 3.45 0 0 1 667.02 1196.05L698.72 1196.05A3.45 3.45 0 0 1 702.17 1199.50L702.17 1274.10" fill="none" stroke="#727272" stroke-width="1.1"/><path d="M718.24 1277.00L718.24 1256.80L757.94 1256.80L757.94 1277.00Z" fill="rgba(127,128,205,0.498)"/><path d="M718.79 1277.00L718.79 1257.35L757.39 1257.35L757.39 1277.00" fill="none" stroke="#7f80cd" stroke-width="1.1"/><path d="M718.24 1256.80L718.24 1256.00L757.94 1256.00L757.94 1256.80Z" fill="rgba(255,127,0,0.498)"/><path d="M718.24 1256.80L718.24 1256.00L757.94 1256.00L757.94 1256.80Z" fill="#ff7f00"/><path d="M718.24 1256.00L718.24 1225.00A4.00 4.00 0 0 1 722.24 1221.00L753.94 1221.00A4.00 4.00 0 0 1 757.94 1225.00L757.94 1256.00Z" fill="rgba(114,114,114,0.498)"/><path d="M718.79 1256.00L718.79 1225.00A3.45 3.45 0 0 1 722.24 1221.55L753.94 1221.55A3.45 3.45 0 0 1 757.39 1225.00L757.39 1256.00" fill="none" stroke="#727272" stroke-width="1.1"/><path d="M773.46 1277.00L773.46 1252.10L813.16 1252.10L813.16 1277.00Z" fill="rgba(127,128,205,0.498)"/><path d="M774.01 1277.00L774.01 1252.65L812.61 1252.65L812.61 1277.00" fill="none" stroke="#7f80cd" stroke-width="1.1"/><path d="M773.46 1252.10L773.46 1251.30L813.16 1251.30L813.16 1252.10Z" fill="rgba(255,127,0,0.498)"/><path d="M773.46 1252.10L773.46 1251.30L813.16 1251.30L813.16 1252.10Z" fill="#ff7f00"/><path d="M773.46 1277.30L773.46 1365.50A4.00 4.00 0 0 0 777.46 1369.50L809.16 1369.50A4.00 4.00 0 0 0 813.16 1365.50L813.16 1277.30Z" fill="rgba(114,114,114,0.498)"/><path d="M774.01 1277.30L774.01 1365.50A3.45 3.45 0 0 0 777.46 1368.95L809.16 1368.95A3.45 3.45 0 0 0 812.61 1365.50L812.61 1277.30" fill="none" stroke="#727272" stroke-width="1.1"/><path d="M828.68 1277.00L828.68 1233.30L868.38 1233.30L868.38 1277.00Z" fill="rgba(127,128,205,0.498)"/><path d="M829.23 1277.00L829.23 1233.85L867.83 1233.85L867.83 1277.00" fill="none" stroke="#7f80cd" stroke-width="1.1"/><path d="M828.68 1233.30L828.68 1232.50L868.38 1232.50L868.38 1233.30Z" fill="rgba(255,127,0,0.498)"/><path d="M828.68 1233.30L828.68 1232.50L868.38 1232.50L868.38 1233.30Z" fill="#ff7f00"/><path d="M828.68 1277.30L828.68 1344.50A4.00 4.00 0 0 0 832.68 1348.50L864.38 1348.50A4.00 4.00 0 0 0 868.38 1344.50L868.38 1277.30Z" fill="rgba(114,114,114,0.498)"/><path d="M829.23 1277.30L829.23 1344.50A3.45 3.45 0 0 0 832.68 1347.95L864.38 1347.95A3.45 3.45 0 0 0 867.83 1344.50L867.83 1277.30" fill="none" stroke="#727272" stroke-width="1.1"/><path d="M883.90 1277.00L883.90 1276.20L923.60 1276.20L923.60 1277.00Z" fill="rgba(255,127,0,0.498)"/><path d="M883.90 1277.00L883.90 1276.20L923.60 1276.20L923.60 1277.00Z" fill="#ff7f00"/><path d="M883.90 1277.30L883.90 1365.50A4.00 4.00 0 0 0 887.90 1369.50L919.60 1369.50A4.00 4.00 0 0 0 923.60 1365.50L923.60 1277.30Z" fill="rgba(114,114,114,0.498)"/><path d="M884.45 1277.30L884.45 1365.50A3.45 3.45 0 0 0 887.90 1368.95L919.60 1368.95A3.45 3.45 0 0 0 923.05 1365.50L923.05 1277.30" fill="none" stroke="#727272" stroke-width="1.1"/><path d="M939.12 1277.00L939.12 1276.20L978.82 1276.20L978.82 1277.00Z" fill="rgba(255,127,0,0.498)"/><path d="M939.12 1277.00L939.12 1276.20L978.82 1276.20L978.82 1277.00Z" fill="#ff7f00"/><path d="M939.12 1277.30L939.12 1369.90A4.00 4.00 0 0 0 943.12 1373.90L974.82 1373.90A4.00 4.00 0 0 0 978.82 1369.90L978.82 1277.30Z" fill="rgba(114,114,114,0.498)"/><path d="M939.67 1277.30L939.67 1369.90A3.45 3.45 0 0 0 943.12 1373.35L974.82 1373.35A3.45 3.45 0 0 0 978.27 1369.90L978.27 1277.30" fill="none" stroke="#727272" stroke-width="1.1"/><path d="M994.34 1277.00L994.34 1276.20L1034.04 1276.20L1034.04 1277.00Z" fill="rgba(255,127,0,0.498)"/><path d="M994.34 1277.00L994.34 1276.20L1034.04 1276.20L1034.04 1277.00Z" fill="#ff7f00"/><path d="M994.34 1277.30L994.34 1495.90A4.00 4.00 0 0 0 998.34 1499.90L1030.04 1499.90A4.00 4.00 0 0 0 1034.04 1495.90L1034.04 1277.30Z" fill="rgba(114,114,114,0.498)"/><path d="M994.89 1277.30L994.89 1495.90A3.45 3.45 0 0 0 998.34 1499.35L1030.04 1499.35A3.45 3.45 0 0 0 1033.49 1495.90L1033.49 1277.30" fill="none" stroke="#727272" stroke-width="1.1"/><path d="M1049.56 1277.00L1049.56 1276.20L1089.26 1276.20L1089.26 1277.00Z" fill="rgba(255,127,0,0.498)"/><path d="M1049.56 1277.00L1049.56 1276.20L1089.26 1276.20L1089.26 1277.00Z" fill="#ff7f00"/><path d="M1049.56 1277.30L1049.56 1497.10A4.00 4.00 0 0 0 1053.56 1501.10L1085.26 1501.10A4.00 4.00 0 0 0 1089.26 1497.10L1089.26 1277.30Z" fill="rgba(114,114,114,0.498)"/><path d="M1050.11 1277.30L1050.11 1497.10A3.45 3.45 0 0 0 1053.56 1500.55L1085.26 1500.55A3.45 3.45 0 0 0 1088.71 1497.10L1088.71 1277.30" fill="none" stroke="#727272" stroke-width="1.1"/><path d="M1104.78 1277.00L1104.78 1276.20L1144.48 1276.20L1144.48 1277.00Z" fill="rgba(255,127,0,0.498)"/><path d="M1104.78 1277.00L1104.78 1276.20L1144.48 1276.20L1144.48 1277.00Z" fill="#ff7f00"/><path d="M1104.78 1277.30L1104.78 1409.60A4.00 4.00 0 0 0 1108.78 1413.60L1140.48 1413.60A4.00 4.00 0 0 0 1144.48 1409.60L1144.48 1277.30Z" fill="rgba(114,114,114,0.498)"/><path d="M1105.33 1277.30L1105.33 1409.60A3.45 3.45 0 0 0 1108.78 1413.05L1140.48 1413.05A3.45 3.45 0 0 0 1143.93 1409.60L1143.93 1277.30" fill="none" stroke="#727272" stroke-width="1.1"/><path d="M1160.00 1277.00L1160.00 1276.00L1199.70 1276.00L1199.70 1277.00Z" fill="rgba(127,128,205,0.498)"/><path d="M1160.00 1277.00L1160.00 1276.00L1199.70 1276.00L1199.70 1277.00Z" fill="#7f80cd"/><path d="M1160.00 1276.00L1160.00 1275.20L1199.70 1275.20L1199.70 1276.00Z" fill="rgba(255,127,0,0.498)"/><path d="M1160.00 1276.00L1160.00 1275.20L1199.70 1275.20L1199.70 1276.00Z" fill="#ff7f00"/><path d="M1160.00 1277.30L1160.00 1354.80A4.00 4.00 0 0 0 1164.00 1358.80L1195.70 1358.80A4.00 4.00 0 0 0 1199.70 1354.80L1199.70 1277.30Z" fill="rgba(114,114,114,0.498)"/><path d="M1160.55 1277.30L1160.55 1354.80A3.45 3.45 0 0 0 1164.00 1358.25L1195.70 1358.25A3.45 3.45 0 0 0 1199.15 1354.80L1199.15 1277.30" fill="none" stroke="#727272" stroke-width="1.1"/><path d="M1215.22 1277.00L1215.22 1276.20L1254.92 1276.20L1254.92 1277.00Z" fill="rgba(255,127,0,0.498)"/><path d="M1215.22 1277.00L1215.22 1276.20L1254.92 1276.20L1254.92 1277.00Z" fill="#ff7f00"/><path d="M1215.22 1277.30L1215.22 1323.90A4.00 4.00 0 0 0 1219.22 1327.90L1250.92 1327.90A4.00 4.00 0 0 0 1254.92 1323.90L1254.92 1277.30Z" fill="rgba(114,114,114,0.498)"/><path d="M1215.77 1277.30L1215.77 1323.90A3.45 3.45 0 0 0 1219.22 1327.35L1250.92 1327.35A3.45 3.45 0 0 0 1254.37 1323.90L1254.37 1277.30" fill="none" stroke="#727272" stroke-width="1.1"/><path d="M1270.44 1277.00L1270.44 1276.20L1310.14 1276.20L1310.14 1277.00Z" fill="rgba(255,127,0,0.498)"/><path d="M1270.44 1277.00L1270.44 1276.20L1310.14 1276.20L1310.14 1277.00Z" fill="#ff7f00"/><path d="M1270.44 1276.20L1270.44 1227.00A4.00 4.00 0 0 1 1274.44 1223.00L1306.14 1223.00A4.00 4.00 0 0 1 1310.14 1227.00L1310.14 1276.20Z" fill="rgba(114,114,114,0.498)"/><path d="M1270.99 1276.20L1270.99 1227.00A3.45 3.45 0 0 1 1274.44 1223.55L1306.14 1223.55A3.45 3.45 0 0 1 1309.59 1227.00L1309.59 1276.20" fill="none" stroke="#727272" stroke-width="1.1"/><path d="M1325.66 1277.00L1325.66 1276.20L1365.36 1276.20L1365.36 1277.00Z" fill="rgba(255,127,0,0.498)"/><path d="M1325.66 1277.00L1325.66 1276.20L1365.36 1276.20L1365.36 1277.00Z" fill="#ff7f00"/><path d="M1325.66 1276.20L1325.66 1197.60A4.00 4.00 0 0 1 1329.66 1193.60L1361.36 1193.60A4.00 4.00 0 0 1 1365.36 1197.60L1365.36 1276.20Z" fill="rgba(114,114,114,0.498)"/><path d="M1326.21 1276.20L1326.21 1197.60A3.45 3.45 0 0 1 1329.66 1194.15L1361.36 1194.15A3.45 3.45 0 0 1 1364.81 1197.60L1364.81 1276.20" fill="none" stroke="#727272" stroke-width="1.1"/><path d="M464.5 1643.5L464.5 1808.5" stroke="rgba(225,225,225,0.105)" stroke-width="1" fill="none"/><path d="M594.5 1643.5L594.5 1808.5" stroke="rgba(225,225,225,0.105)" stroke-width="1" fill="none"/><path d="M724.5 1643.5L724.5 1808.5" stroke="rgba(225,225,225,0.105)" stroke-width="1" fill="none"/><path d="M855.5 1643.5L855.5 1808.5" stroke="rgba(225,225,225,0.105)" stroke-width="1" fill="none"/><path d="M985.5 1643.5L985.5 1808.5" stroke="rgba(225,225,225,0.105)" stroke-width="1" fill="none"/><path d="M1116.5 1643.5L1116.5 1808.5" stroke="rgba(225,225,225,0.105)" stroke-width="1" fill="none"/><path d="M1246.5 1643.5L1246.5 1808.5" stroke="rgba(225,225,225,0.105)" stroke-width="1" fill="none"/><path d="M1376.5 1643.5L1376.5 1808.5" stroke="rgba(225,225,225,0.105)" stroke-width="1" fill="none"/><path d="M1507.5 1643.5L1507.5 1808.5" stroke="rgba(225,225,225,0.105)" stroke-width="1" fill="none"/><path d="M1637.5 1643.5L1637.5 1808.5" stroke="rgba(225,225,225,0.105)" stroke-width="1" fill="none"/><path d="M456.5 1643.5L1638 1643.5" stroke="rgba(225,225,225,0.105)" stroke-width="1" fill="none"/><path d="M456.5 1669.5L1638 1669.5" stroke="rgba(225,225,225,0.105)" stroke-width="1" fill="none"/><path d="M456.5 1695.5L1638 1695.5" stroke="rgba(225,225,225,0.105)" stroke-width="1" fill="none"/><path d="M456.5 1721.5L1638 1721.5" stroke="rgba(225,225,225,0.105)" stroke-width="1" fill="none"/><path d="M456.5 1747.5L1638 1747.5" stroke="rgba(225,225,225,0.105)" stroke-width="1" fill="none"/><path d="M456.5 1774.5L1638 1774.5" stroke="rgba(225,225,225,0.105)" stroke-width="1" fill="none"/><path d="M456.5 1800.5L1638 1800.5" stroke="rgba(225,225,225,0.105)" stroke-width="1" fill="none"/><path d="M464.5 1646.48L1582.8 1646.48A4 4 0 0 1 1586.8 1650.48L1586.8 1662.6799999999998A4 4 0 0 1 1582.8 1666.6799999999998L464.5 1666.6799999999998Z" fill="rgba(127,128,205,0.498)"/><path d="M464.5 1647.03L1582.8 1647.03A3.45 3.45 0 0 1 1586.25 1650.48L1586.25 1662.6799999999998A3.45 3.45 0 0 1 1582.8 1666.1299999999999L464.5 1666.1299999999999" fill="none" stroke="#7f80cd" stroke-width="1.1"/><path d="M464.5 1672.65L651.8 1672.65A4 4 0 0 1 655.8 1676.65L655.8 1688.85A4 4 0 0 1 651.8 1692.85L464.5 1692.85Z" fill="rgba(255,127,0,0.498)"/><path d="M464.5 1673.2L651.8 1673.2A3.45 3.45 0 0 1 655.25 1676.65L655.25 1688.85A3.45 3.45 0 0 1 651.8 1692.3L464.5 1692.3" fill="none" stroke="#ff7f00" stroke-width="1.1"/><path d="M464.5 1698.82L536.9 1698.82A4 4 0 0 1 540.9 1702.82L540.9 1715.0199999999998A4 4 0 0 1 536.9 1719.0199999999998L464.5 1719.0199999999998Z" fill="rgba(175,141,0,0.498)"/><path d="M464.5 1699.37L536.9 1699.37A3.45 3.45 0 0 1 540.35 1702.82L540.35 1715.0199999999998A3.45 3.45 0 0 1 536.9 1718.4699999999998L464.5 1718.4699999999998" fill="none" stroke="#af8d00" stroke-width="1.1"/></svg>
<svg style="position:absolute;left:1674px;top:55px" width="228" height="186" viewBox="1674 55 228 186"><path d="M1771.2 163.3L1804.8 163.3" stroke="#488fc2" stroke-width="1.4" fill="none"/><circle cx="1731.2" cy="164" r="39.2" fill="none" stroke="#488fc2" stroke-width="2"/><circle cx="1845" cy="164" r="39.2" fill="none" stroke="#03a9f4" stroke-width="2"/></svg>
<svg style="position:absolute;left:1719.0px;top:136.6px" width="24" height="24" viewBox="0 0 24 24"><path fill="#e1e1e1" d="M8.28,5.45L6.5,4.55L7.76,2H16.23L17.5,4.55L15.72,5.44L15,4H9L8.28,5.45M18.62,8H14.09L13.3,5H10.7L9.91,8H5.38L4.1,10.55L5.89,11.44L6.62,10H17.38L18.1,11.45L19.89,10.56L18.62,8M17.77,22H15.7L15.46,21.1L12,15.9L8.53,21.1L8.3,22H6.21L9.12,11H11.19L10.83,12.35L12,14.1L13.16,12.35L12.81,11H14.88L17.77,22M11.4,15L10.5,13.65L9.32,18.13L11.4,15M14.68,18.12L13.5,13.64L12.6,15L14.68,18.12Z"/></svg>
<svg style="position:absolute;left:1833.0px;top:145.0px" width="24" height="24" viewBox="0 0 24 24"><path fill="#e1e1e1" d="M10,20V14H14V20H19V12H22L12,3L2,12H5V20H10Z"/></svg>
<svg style="position:absolute;left:1703.8px;top:162.8px" width="12" height="12" viewBox="0 0 24 24"><path fill="#a280db" d="M20,11V13H8L13.5,18.5L12.08,19.92L4.16,12L12.08,4.08L13.5,5.5L8,11H20Z"/></svg>
<svg style="position:absolute;left:1703.8px;top:177.6px" width="12" height="12" viewBox="0 0 24 24"><path fill="#488fc2" d="M4,11V13H16L10.5,18.5L11.92,19.92L19.84,12L11.92,4.08L10.5,5.5L16,11H4Z"/></svg>
<svg style="position:absolute;left:1674px;top:249px" width="228" height="157" viewBox="1674 249 228 157"><path d="M1695.60 363.1A92.20 92.20 0 0 1 1787.80 270.90L1787.80 300.02A63.08 63.08 0 0 0 1724.72 363.1Z" fill="#488fc2"/><path d="M1787.80 270.90A92.20 92.20 0 0 1 1880.00 363.1L1850.88 363.1A63.08 63.08 0 0 0 1787.80 300.02Z" fill="#a280db"/><path d="M1819.09 325.69L1839.62 286.85L1811.06 320.24Z" fill="#e1e1e1"/></svg>
<svg style="position:absolute;left:1872.9px;top:254.0px" width="24" height="24" viewBox="0 0 24 24"><path fill="#9b9b9b" d="M13,9H11V7H13M13,17H11V11H13M12,2A10,10 0 0,0 2,12A10,10 0 0,0 12,22A10,10 0 0,0 22,12A10,10 0 0,0 12,2Z"/></svg>
<div style="position:absolute;left:255px;top:657px;width:1410px;height:1px;background:#343434;"></div>
<div style="position:absolute;left:271px;top:674.5px;width:34px;height:18px;box-sizing:border-box;border-radius:4px;background:rgba(72,143,194,0.498);border:1px solid #488fc2"></div>
<div style="position:absolute;left:255px;top:709.0px;width:1410px;height:1px;background:#343434;"></div>
<div style="position:absolute;left:271px;top:726.5px;width:34px;height:18px;box-sizing:border-box;border-radius:4px;background:rgba(125,191,245,0.498);border:1px solid #7dbff5"></div>
<div style="position:absolute;left:255px;top:761.0px;width:1410px;height:1px;background:#343434;"></div>
<div style="position:absolute;left:271px;top:778.5px;width:34px;height:18px;box-sizing:border-box;border-radius:4px;background:rgba(177,242,255,0.498);border:1px solid #b1f2ff"></div>
<div style="position:absolute;left:255px;top:813.0px;width:1410px;height:1px;background:#343434;"></div>
<div style="position:absolute;left:271px;top:830.5px;width:34px;height:18px;box-sizing:border-box;border-radius:4px;background:rgba(162,128,219,0.498);border:1px solid #a280db"></div>
<div style="position:absolute;left:255px;top:865.0px;width:1410px;height:1px;background:#343434;"></div>
<div style="position:absolute;left:271px;top:882.5px;width:34px;height:18px;box-sizing:border-box;border-radius:4px;background:rgba(213,176,255,0.498);border:1px solid #d5b0ff"></div>
<div style="position:absolute;left:255px;top:917.0px;width:1410px;height:1px;background:#343434;"></div>
<div style="position:absolute;left:271px;top:934.5px;width:34px;height:18px;box-sizing:border-box;border-radius:4px;background:rgba(255,226,255,0.498);border:1px solid #ffe2ff"></div>
<div style="position:absolute;left:255px;top:969.0px;width:1410px;height:1px;background:#343434;"></div>
<div style="position:absolute;left:255px;top:969px;width:1410px;height:2px;background:#343434;"></div>
<span class="t" style="left:61.50px;top:9.07px;font-size:20px;color:#e1e1e1;transform-origin:left center;transform:scaleX(1.0190);will-change:transform;">Home Assistant</span>
<span class="t" style="left:282.50px;top:9.07px;font-size:20px;color:#e1e1e1;transform-origin:left center;transform:scaleX(0.9467);will-change:transform;">Energy</span>
<span class="t" style="left:62.00px;top:68.15px;font-size:14px;color:#e1e1e1;-webkit-text-stroke:0.35px #e1e1e1;transform-origin:left center;transform:scaleX(0.9733);will-change:transform;">Overview</span>
<span class="t" style="left:62.00px;top:116.15px;font-size:14px;color:#e1e1e1;-webkit-text-stroke:0.35px #e1e1e1;transform-origin:left center;transform:scaleX(1.0211);will-change:transform;">Main</span>
<span class="t" style="left:62.00px;top:164.15px;font-size:14px;color:#e1e1e1;-webkit-text-stroke:0.35px #e1e1e1;transform-origin:left center;transform:scaleX(0.9991);will-change:transform;">Mapa</span>
<span class="t" style="left:62.00px;top:212.15px;font-size:14px;color:#03a9f4;-webkit-text-stroke:0.35px #03a9f4;transform-origin:left center;transform:scaleX(0.9536);will-change:transform;">Energy</span>
<span class="t" style="left:62.00px;top:260.15px;font-size:14px;color:#e1e1e1;-webkit-text-stroke:0.35px #e1e1e1;transform-origin:left center;transform:scaleX(1.0052);will-change:transform;">Logbook</span>
<span class="t" style="left:62.00px;top:308.15px;font-size:14px;color:#e1e1e1;-webkit-text-stroke:0.35px #e1e1e1;transform-origin:left center;transform:scaleX(1.0261);will-change:transform;">History</span>
<span class="t" style="left:62.00px;top:356.15px;font-size:14px;color:#e1e1e1;-webkit-text-stroke:0.35px #e1e1e1;transform-origin:left center;transform:scaleX(1.0054);will-change:transform;">File editor</span>
<span class="t" style="left:62.00px;top:404.15px;font-size:14px;color:#e1e1e1;-webkit-text-stroke:0.35px #e1e1e1;transform-origin:left center;transform:scaleX(0.9330);will-change:transform;">HACS</span>
<span class="t" style="left:62.00px;top:452.15px;font-size:14px;color:#e1e1e1;-webkit-text-stroke:0.35px #e1e1e1;transform-origin:left center;transform:scaleX(1.0042);will-change:transform;">Media</span>
<span class="t" style="left:62.00px;top:500.15px;font-size:14px;color:#e1e1e1;-webkit-text-stroke:0.35px #e1e1e1;transform-origin:left center;transform:scaleX(0.9788);will-change:transform;">Studio Code Server</span>
<span class="t" style="left:62.00px;top:548.15px;font-size:14px;color:#e1e1e1;-webkit-text-stroke:0.35px #e1e1e1;transform-origin:left center;transform:scaleX(1.0282);will-change:transform;">Terminal</span>
<span class="t" style="left:62.00px;top:596.15px;font-size:14px;color:#e1e1e1;-webkit-text-stroke:0.35px #e1e1e1;transform-origin:left center;transform:scaleX(0.9871);will-change:transform;">Zigbee2MQTT Proxy</span>
<span class="t" style="left:62.00px;top:1670.15px;font-size:14px;color:#e1e1e1;-webkit-text-stroke:0.35px #e1e1e1;transform-origin:left center;transform:scaleX(0.9971);will-change:transform;">Developer tools</span>
<span class="t" style="left:62.00px;top:1718.15px;font-size:14px;color:#e1e1e1;-webkit-text-stroke:0.35px #e1e1e1;transform-origin:left center;transform:scaleX(1.0159);will-change:transform;">Settings</span>
<span class="t" style="left:62.00px;top:1791.15px;font-size:14px;color:#e1e1e1;-webkit-text-stroke:0.35px #e1e1e1;transform-origin:left center;transform:scaleX(1.0490);will-change:transform;">Notifications</span>
<span class="t" style="left:13.55px;top:1838.16px;font-size:16px;color:#1c1c1c;will-change:transform;">p</span>
<span class="t" style="left:62.00px;top:1839.15px;font-size:14px;color:#e1e1e1;-webkit-text-stroke:0.35px #e1e1e1;transform-origin:left center;transform:scaleX(1.0178);will-change:transform;">pancio</span>
<span class="t" style="left:1456.00px;top:9.07px;font-size:20px;color:#e1e1e1;transform-origin:left center;transform:scaleX(0.9821);">September 19, 2024</span>
<span class="t" style="left:1803.14px;top:13.84px;font-size:12px;color:#e1e1e1;-webkit-text-stroke:0.35px #e1e1e1;transform-origin:center center;transform:scaleX(1.0127);">NOW</span>
<span class="t" style="left:271.50px;top:80.68px;font-size:24px;color:#e1e1e1;transform-origin:left center;transform:scaleX(0.9385);">Energy usage</span>
<span class="t" style="left:271.50px;top:566.68px;font-size:24px;color:#e1e1e1;transform-origin:left center;transform:scaleX(0.9540);">Sources</span>
<span class="t" style="left:271.50px;top:1056.68px;font-size:24px;color:#e1e1e1;transform-origin:left center;transform:scaleX(0.9707);">Individual devices detail usage</span>
<span class="t" style="left:271.50px;top:1597.68px;font-size:24px;color:#e1e1e1;transform-origin:left center;transform:scaleX(0.9727);">Individual devices total usage</span>
<span class="t" style="left:1692.00px;top:80.68px;font-size:24px;color:#e1e1e1;transform-origin:left center;transform:scaleX(0.9684);">Energy distribution</span>
<span class="t" style="left:306.31px;top:119.74px;font-size:12px;color:#9b9b9b;will-change:transform;">1</span>
<span class="t" style="left:296.31px;top:179.84px;font-size:12px;color:#9b9b9b;transform-origin:right center;transform:scaleX(0.9768);will-change:transform;">0.5</span>
<span class="t" style="left:306.31px;top:240.04px;font-size:12px;color:#9b9b9b;will-change:transform;">0</span>
<span class="t" style="left:296.31px;top:300.84px;font-size:12px;color:#9b9b9b;transform-origin:right center;transform:scaleX(0.9768);will-change:transform;">0.5</span>
<span class="t" style="left:306.31px;top:361.24px;font-size:12px;color:#9b9b9b;will-change:transform;">1</span>
<span class="t" style="left:296.31px;top:421.34px;font-size:12px;color:#9b9b9b;transform-origin:right center;transform:scaleX(0.9768);will-change:transform;">1.5</span>
<span class="t" style="left:306.31px;top:481.74px;font-size:12px;color:#9b9b9b;will-change:transform;">2</span>
<span class="t" style="left:326.20px;top:499.94px;font-size:12px;color:#9b9b9b;transform-origin:center center;transform:scaleX(0.9782);will-change:transform;">12:00 AM</span>
<span class="t" style="left:439.97px;top:499.94px;font-size:12px;color:#9b9b9b;transform-origin:center center;transform:scaleX(0.9879);will-change:transform;">2:00 AM</span>
<span class="t" style="left:550.41px;top:499.94px;font-size:12px;color:#9b9b9b;transform-origin:center center;transform:scaleX(0.9879);will-change:transform;">4:00 AM</span>
<span class="t" style="left:660.85px;top:499.94px;font-size:12px;color:#9b9b9b;transform-origin:center center;transform:scaleX(0.9879);will-change:transform;">6:00 AM</span>
<span class="t" style="left:771.29px;top:499.94px;font-size:12px;color:#9b9b9b;transform-origin:center center;transform:scaleX(0.9879);will-change:transform;">8:00 AM</span>
<span class="t" style="left:878.40px;top:499.94px;font-size:12px;color:#9b9b9b;transform-origin:center center;transform:scaleX(0.9782);will-change:transform;">10:00 AM</span>
<span class="t" style="left:988.50px;top:499.94px;font-size:12px;color:#9b9b9b;transform-origin:center center;transform:scaleX(0.9655);will-change:transform;">12:00 PM</span>
<span class="t" style="left:1102.28px;top:499.94px;font-size:12px;color:#9b9b9b;transform-origin:center center;transform:scaleX(0.9731);will-change:transform;">2:00 PM</span>
<span class="t" style="left:1212.72px;top:499.94px;font-size:12px;color:#9b9b9b;transform-origin:center center;transform:scaleX(0.9731);will-change:transform;">4:00 PM</span>
<span class="t" style="left:1323.16px;top:499.94px;font-size:12px;color:#9b9b9b;transform-origin:center center;transform:scaleX(0.9731);will-change:transform;">6:00 PM</span>
<span class="t" style="left:1433.60px;top:499.94px;font-size:12px;color:#9b9b9b;transform-origin:center center;transform:scaleX(0.9731);will-change:transform;">8:00 PM</span>
<span class="t" style="left:1540.70px;top:499.94px;font-size:12px;color:#9b9b9b;transform-origin:center center;transform:scaleX(0.9655);will-change:transform;">10:00 PM</span>
<span class="t" style="left:273.00px;top:296.84px;font-size:12px;color:#9b9b9b;transform-origin:12.00px 10.16px;transform:rotate(-90deg) scaleX(0.8750);will-change:transform;">kWh</span>
<span class="t" style="left:306.31px;top:1150.84px;font-size:12px;color:#9b9b9b;will-change:transform;">1</span>
<span class="t" style="left:296.31px;top:1210.74px;font-size:12px;color:#9b9b9b;transform-origin:right center;transform:scaleX(0.9768);will-change:transform;">0.5</span>
<span class="t" style="left:306.31px;top:1270.74px;font-size:12px;color:#9b9b9b;will-change:transform;">0</span>
<span class="t" style="left:296.31px;top:1330.94px;font-size:12px;color:#9b9b9b;transform-origin:right center;transform:scaleX(0.9768);will-change:transform;">0.5</span>
<span class="t" style="left:306.31px;top:1391.54px;font-size:12px;color:#9b9b9b;will-change:transform;">1</span>
<span class="t" style="left:296.31px;top:1451.84px;font-size:12px;color:#9b9b9b;transform-origin:right center;transform:scaleX(0.9768);will-change:transform;">1.5</span>
<span class="t" style="left:306.31px;top:1511.94px;font-size:12px;color:#9b9b9b;will-change:transform;">2</span>
<span class="t" style="left:326.20px;top:1529.94px;font-size:12px;color:#9b9b9b;transform-origin:center center;transform:scaleX(0.9782);will-change:transform;">12:00 AM</span>
<span class="t" style="left:439.97px;top:1529.94px;font-size:12px;color:#9b9b9b;transform-origin:center center;transform:scaleX(0.9879);will-change:transform;">2:00 AM</span>
<span class="t" style="left:550.41px;top:1529.94px;font-size:12px;color:#9b9b9b;transform-origin:center center;transform:scaleX(0.9879);will-change:transform;">4:00 AM</span>
<span class="t" style="left:660.85px;top:1529.94px;font-size:12px;color:#9b9b9b;transform-origin:center center;transform:scaleX(0.9879);will-change:transform;">6:00 AM</span>
<span class="t" style="left:771.29px;top:1529.94px;font-size:12px;color:#9b9b9b;transform-origin:center center;transform:scaleX(0.9879);will-change:transform;">8:00 AM</span>
<span class="t" style="left:878.40px;top:1529.94px;font-size:12px;color:#9b9b9b;transform-origin:center center;transform:scaleX(0.9782);will-change:transform;">10:00 AM</span>
<span class="t" style="left:988.50px;top:1529.94px;font-size:12px;color:#9b9b9b;transform-origin:center center;transform:scaleX(0.9655);will-change:transform;">12:00 PM</span>
<span class="t" style="left:1102.28px;top:1529.94px;font-size:12px;color:#9b9b9b;transform-origin:center center;transform:scaleX(0.9731);will-change:transform;">2:00 PM</span>
<span class="t" style="left:1212.72px;top:1529.94px;font-size:12px;color:#9b9b9b;transform-origin:center center;transform:scaleX(0.9731);will-change:transform;">4:00 PM</span>
<span class="t" style="left:1323.16px;top:1529.94px;font-size:12px;color:#9b9b9b;transform-origin:center center;transform:scaleX(0.9731);will-change:transform;">6:00 PM</span>
<span class="t" style="left:1433.60px;top:1529.94px;font-size:12px;color:#9b9b9b;transform-origin:center center;transform:scaleX(0.9731);will-change:transform;">8:00 PM</span>
<span class="t" style="left:1540.70px;top:1529.94px;font-size:12px;color:#9b9b9b;transform-origin:center center;transform:scaleX(0.9655);will-change:transform;">10:00 PM</span>
<span class="t" style="left:273.00px;top:1326.84px;font-size:12px;color:#9b9b9b;transform-origin:12.00px 10.16px;transform:rotate(-90deg) scaleX(0.8750);will-change:transform;">kWh</span>
<span class="t" style="left:375.80px;top:1104.64px;font-size:12px;color:#9b9b9b;transform-origin:left center;transform:scaleX(1.0714);">PW_BOILER ENERGY Today</span>
<span class="t" style="left:584.40px;top:1104.64px;font-size:12px;color:#9b9b9b;transform-origin:left center;transform:scaleX(1.0623);">PW_IGOR_DESK ENERGY Today</span>
<span class="t" style="left:819.00px;top:1104.64px;font-size:12px;color:#9b9b9b;transform-origin:left center;transform:scaleX(1.0719);">PW_KAROL_DESK ENERGY Today</span>
<span class="t" style="left:1066.00px;top:1104.64px;font-size:12px;color:#9b9b9b;transform-origin:left center;transform:scaleX(1.1066);">SW1 BATHROOM energy</span>
<span class="t" style="left:1256.00px;top:1104.64px;font-size:12px;color:#9b9b9b;transform-origin:left center;transform:scaleX(1.0853);">SW1 WARDROBE energy</span>
<span class="t" style="left:1444.80px;top:1104.64px;font-size:12px;color:#9b9b9b;transform-origin:left center;transform:scaleX(1.1153);">SW1 Garage energy</span>
<span class="t" style="left:897.00px;top:1127.84px;font-size:12px;color:#9b9b9b;transform-origin:left center;transform:scaleX(1.1739);">Untracked consumption</span>
<span class="t" style="left:461.16px;top:1811.14px;font-size:12px;color:#9b9b9b;will-change:transform;">0</span>
<span class="t" style="left:586.16px;top:1811.14px;font-size:12px;color:#9b9b9b;will-change:transform;">0.1</span>
<span class="t" style="left:716.16px;top:1811.14px;font-size:12px;color:#9b9b9b;will-change:transform;">0.2</span>
<span class="t" style="left:847.16px;top:1811.14px;font-size:12px;color:#9b9b9b;will-change:transform;">0.3</span>
<span class="t" style="left:977.16px;top:1811.14px;font-size:12px;color:#9b9b9b;will-change:transform;">0.4</span>
<span class="t" style="left:1108.16px;top:1811.14px;font-size:12px;color:#9b9b9b;will-change:transform;">0.5</span>
<span class="t" style="left:1238.16px;top:1811.14px;font-size:12px;color:#9b9b9b;will-change:transform;">0.6</span>
<span class="t" style="left:1368.16px;top:1811.14px;font-size:12px;color:#9b9b9b;will-change:transform;">0.7</span>
<span class="t" style="left:1499.16px;top:1811.14px;font-size:12px;color:#9b9b9b;will-change:transform;">0.8</span>
<span class="t" style="left:1629.16px;top:1811.14px;font-size:12px;color:#9b9b9b;will-change:transform;">0.9</span>
<span class="t" style="left:294.25px;top:1649.12px;font-size:12px;color:#9b9b9b;transform-origin:right center;transform:scaleX(0.9217);will-change:transform;">PW_BOILER ENERGY Today</span>
<span class="t" style="left:268.23px;top:1675.29px;font-size:12px;color:#9b9b9b;transform-origin:right center;transform:scaleX(0.9137);will-change:transform;">PW_IGOR_DESK ENERGY Today</span>
<span class="t" style="left:258.22px;top:1702.36px;font-size:12px;color:#9b9b9b;transform-origin:right center;transform:scaleX(0.9206);will-change:transform;">PW_KAROL_DESK ENERGY Today</span>
<span class="t" style="left:315.39px;top:1727.63px;font-size:12px;color:#9b9b9b;transform-origin:right center;transform:scaleX(0.9506);will-change:transform;">SW1 BATHROOM energy</span>
<span class="t" style="left:313.61px;top:1753.80px;font-size:12px;color:#9b9b9b;transform-origin:right center;transform:scaleX(0.9313);will-change:transform;">SW1 WARDROBE energy</span>
<span class="t" style="left:343.81px;top:1779.97px;font-size:12px;color:#9b9b9b;transform-origin:right center;transform:scaleX(0.9599);will-change:transform;">SW1 Garage energy</span>
<span class="t" style="left:1038.50px;top:1832.14px;font-size:12px;color:#9b9b9b;transform-origin:center center;transform:scaleX(0.9583);will-change:transform;">kWh</span>
<span class="t" style="left:1716.20px;top:163.14px;font-size:12px;color:#a280db;transform-origin:left center;transform:scaleX(0.9610);">9.4 kWh</span>
<span class="t" style="left:1716.20px;top:177.94px;font-size:12px;color:#488fc2;transform-origin:left center;transform:scaleX(0.9610);">5.9 kWh</span>
<span class="t" style="left:1823.19px;top:172.14px;font-size:12px;color:#e1e1e1;transform-origin:center center;transform:scaleX(0.9542);">5.9 kWh</span>
<span class="t" style="left:1719.86px;top:209.04px;font-size:12px;color:#9b9b9b;transform-origin:center center;transform:scaleX(0.9483);">Grid</span>
<span class="t" style="left:1828.99px;top:209.04px;font-size:12px;color:#9b9b9b;transform-origin:center center;transform:scaleX(0.9995);">Home</span>
<span class="t" style="left:1738.06px;top:342.51px;font-size:23.5px;color:#e1e1e1;transform-origin:center center;transform:scaleX(0.9599);will-change:transform;">3.57 kWh</span>
<span class="t" style="left:1711.07px;top:372.30px;font-size:15px;color:#e1e1e1;transform-origin:center center;transform:scaleX(0.9957);">Net returned to the grid</span>
<span class="t" style="left:320.50px;top:623.84px;font-size:12px;color:#e1e1e1;-webkit-text-stroke:0.45px #e1e1e1;transform-origin:left center;transform:scaleX(1.0255);">Source</span>
<span class="t" style="left:1283.00px;top:623.84px;font-size:12px;color:#e1e1e1;-webkit-text-stroke:0.45px #e1e1e1;transform-origin:left center;transform:scaleX(0.9992);">Energy</span>
<span class="t" style="left:320.50px;top:677.54px;font-size:12px;color:#e1e1e1;transform-origin:left center;transform:scaleX(1.0074);">SDM630 ENERGY Total 0</span>
<span class="t" style="left:1283.00px;top:677.54px;font-size:12px;color:#e1e1e1;transform-origin:left center;transform:scaleX(1.0224);">2.2 kWh</span>
<span class="t" style="left:320.50px;top:729.54px;font-size:12px;color:#e1e1e1;transform-origin:left center;transform:scaleX(1.0074);">SDM630 ENERGY Total 1</span>
<span class="t" style="left:1283.00px;top:729.54px;font-size:12px;color:#e1e1e1;transform-origin:left center;transform:scaleX(1.0256);">1.68 kWh</span>
<span class="t" style="left:320.50px;top:781.54px;font-size:12px;color:#e1e1e1;transform-origin:left center;transform:scaleX(1.0074);">SDM630 ENERGY Total 2</span>
<span class="t" style="left:1283.00px;top:781.54px;font-size:12px;color:#e1e1e1;transform-origin:left center;transform:scaleX(1.0256);">1.99 kWh</span>
<span class="t" style="left:320.50px;top:833.54px;font-size:12px;color:#e1e1e1;transform-origin:left center;transform:scaleX(1.0155);">SDM630 ENERGY ExportActive 0</span>
<span class="t" style="left:1283.00px;top:833.54px;font-size:12px;color:#e1e1e1;transform-origin:left center;transform:scaleX(1.0149);">-5.92 kWh</span>
<span class="t" style="left:320.50px;top:885.54px;font-size:12px;color:#e1e1e1;transform-origin:left center;transform:scaleX(1.0100);">SDM630 ENERGY ExportActive 1</span>
<span class="t" style="left:1283.00px;top:885.54px;font-size:12px;color:#e1e1e1;transform-origin:left center;transform:scaleX(1.0149);">-2.34 kWh</span>
<span class="t" style="left:320.50px;top:937.54px;font-size:12px;color:#e1e1e1;transform-origin:left center;transform:scaleX(1.0155);">SDM630 ENERGY ExportActive 2</span>
<span class="t" style="left:1283.00px;top:937.54px;font-size:12px;color:#e1e1e1;transform-origin:left center;transform:scaleX(1.0149);">-1.17 kWh</span>
<span class="t" style="left:320.50px;top:990.84px;font-size:12px;color:#e1e1e1;-webkit-text-stroke:0.45px #e1e1e1;transform-origin:left center;transform:scaleX(1.0783);">Grid total</span>
<span class="t" style="left:1283.00px;top:990.84px;font-size:12px;color:#e1e1e1;-webkit-text-stroke:0.45px #e1e1e1;transform-origin:left center;transform:scaleX(1.0423);">-3.57 kWh</span>
</body></html>
